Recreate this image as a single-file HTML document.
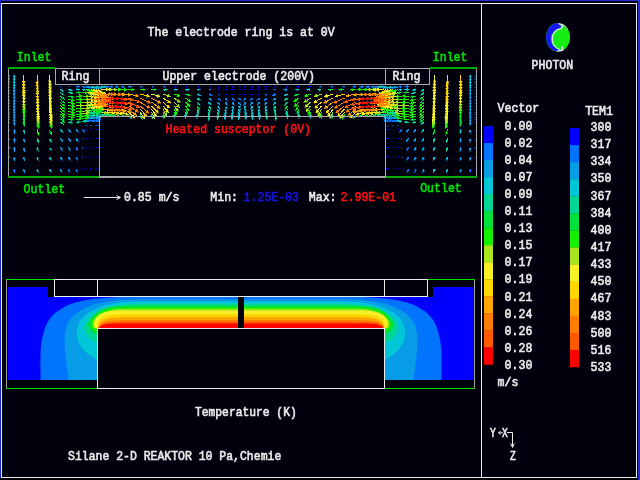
<!DOCTYPE html>
<html lang="en"><head><meta charset="utf-8"><title>PHOTON - Silane 2-D Reaktor</title>
<style>html,body{margin:0;padding:0;background:#01010d;overflow:hidden}svg{display:block}text{font-family:'Liberation Mono','DejaVu Sans Mono',monospace;font-size:12.4px;font-weight:normal;stroke-width:0.6px;paint-order:stroke}</style></head><body>
<svg width="640" height="480" viewBox="0 0 640 480">
<rect x="0" y="0" width="640" height="480" fill="#01010d"/>
<rect x="0" y="0" width="640" height="1" fill="#2030e0"/>
<rect x="0" y="0" width="1" height="480" fill="#1828d0"/>
<rect x="638" y="0" width="2" height="480" fill="#2030c8"/>
<rect x="1" y="1" width="637" height="2" fill="#000004"/>
<rect x="0" y="478" width="638" height="2" fill="#000004"/>
<rect x="1.5" y="3.5" width="635" height="474" fill="none" stroke="#ececec" stroke-width="1"/>
<rect x="481" y="3" width="1" height="474" fill="#ececec"/>
<g stroke-width="1" stroke-linecap="butt" shape-rendering="crispEdges">
<path fill="none" stroke="#0000ff" d="M174.0,86.8L174.5,86.8M185.5,86.8L186.0,86.8M197.0,86.8L197.5,86.8M208.7,86.8L209.2,86.8M217.7,86.8L218.2,86.8M217.7,89.5L218.2,89.5M225.0,86.8L225.5,86.8M225.0,89.5L225.5,89.5M225.0,94.0L225.5,94.3M232.0,86.8L232.5,86.8M232.0,89.5L232.5,89.5M232.0,94.0L232.5,94.3M238.7,86.8L239.2,86.8M238.7,89.5L239.2,89.5M238.7,94.0L239.1,94.3M310.5,86.8L310.0,86.8M299.0,86.8L298.5,86.8M287.5,86.8L287.0,86.8M275.8,86.8L275.3,86.8M266.8,86.8L266.3,86.8M266.8,89.5L266.3,89.5M259.5,86.8L259.0,86.8M259.5,89.5L259.0,89.5M259.5,94.0L259.0,94.3M252.5,86.8L252.0,86.8M252.5,89.5L252.0,89.5M252.5,94.0L252.0,94.3M245.8,86.8L245.3,86.8M245.8,89.5L245.3,89.5M245.8,94.0L245.4,94.3"/>
<path fill="#0000ff" stroke="#0000ff" stroke-width="0.4" d="M9.5,170.0L9.1,168.7L9.9,168.7ZM82.9,169.9L82.0,168.9L82.8,168.5ZM86.8,129.9L85.4,129.7L85.8,128.9ZM86.7,138.8L85.4,138.7L85.7,137.9ZM86.7,147.8L85.3,147.7L85.7,146.9ZM86.6,157.3L85.3,157.1L85.6,156.3ZM86.5,169.2L85.2,169.1L85.5,168.3ZM91.8,129.9L90.4,129.7L90.8,128.9ZM91.7,138.8L90.4,138.7L90.7,137.9ZM91.7,147.8L90.3,147.7L90.7,146.9ZM91.6,157.3L90.3,157.1L90.6,156.3ZM91.5,169.2L90.2,169.1L90.5,168.3ZM96.8,129.9L95.4,129.7L95.8,128.9ZM96.7,138.8L95.4,138.7L95.7,137.9ZM96.7,147.8L95.3,147.7L95.7,146.9ZM96.6,157.3L95.3,157.1L95.6,156.3ZM96.5,169.2L95.2,169.1L95.5,168.3ZM99.3,129.9L97.9,129.7L98.3,128.9ZM99.2,138.8L97.9,138.7L98.2,137.9ZM99.2,147.8L97.8,147.7L98.2,146.9ZM99.1,157.3L97.8,157.1L98.1,156.3ZM99.0,169.2L97.7,169.1L98.0,168.3ZM176.6,86.8L174.5,87.5L174.5,86.1ZM188.1,86.8L186.0,87.5L186.0,86.1ZM199.6,86.8L197.5,87.5L197.5,86.1ZM211.3,86.8L209.2,87.5L209.2,86.1ZM220.3,86.8L218.2,87.5L218.2,86.1ZM220.3,89.7L218.2,90.2L218.3,88.8ZM227.6,86.8L225.5,87.5L225.5,86.1ZM227.6,89.7L225.5,90.2L225.6,88.8ZM227.3,95.3L225.1,94.9L225.8,93.6ZM234.6,86.8L232.5,87.5L232.5,86.1ZM234.6,89.7L232.5,90.2L232.6,88.8ZM234.3,95.3L232.1,94.9L232.8,93.7ZM241.3,86.8L239.2,87.5L239.2,86.1ZM241.3,89.7L239.2,90.2L239.3,88.8ZM240.9,95.3L238.8,94.9L239.5,93.7ZM475.0,170.0L475.4,168.7L474.6,168.7ZM401.6,169.9L402.5,168.9L401.7,168.5ZM397.7,129.9L399.1,129.7L398.7,128.9ZM397.8,138.8L399.1,138.7L398.8,137.9ZM397.8,147.8L399.2,147.7L398.8,146.9ZM397.9,157.3L399.2,157.1L398.9,156.3ZM398.0,169.2L399.3,169.1L399.0,168.3ZM392.7,129.9L394.1,129.7L393.7,128.9ZM392.8,138.8L394.1,138.7L393.8,137.9ZM392.8,147.8L394.2,147.7L393.8,146.9ZM392.9,157.3L394.2,157.1L393.9,156.3ZM393.0,169.2L394.3,169.1L394.0,168.3ZM387.7,129.9L389.1,129.7L388.7,128.9ZM387.8,138.8L389.1,138.7L388.8,137.9ZM387.8,147.8L389.2,147.7L388.8,146.9ZM387.9,157.3L389.2,157.1L388.9,156.3ZM388.0,169.2L389.3,169.1L389.0,168.3ZM385.2,129.9L386.6,129.7L386.2,128.9ZM385.3,138.8L386.6,138.7L386.3,137.9ZM385.3,147.8L386.7,147.7L386.3,146.9ZM385.4,157.3L386.7,157.1L386.4,156.3ZM385.5,169.2L386.8,169.1L386.5,168.3ZM307.9,86.8L310.0,87.5L310.0,86.1ZM296.4,86.8L298.5,87.5L298.5,86.1ZM284.9,86.8L287.0,87.5L287.0,86.1ZM273.2,86.8L275.3,87.5L275.3,86.1ZM264.2,86.8L266.3,87.5L266.3,86.1ZM264.2,89.7L266.3,90.2L266.2,88.8ZM256.9,86.8L259.0,87.5L259.0,86.1ZM256.9,89.7L259.0,90.2L258.9,88.8ZM257.2,95.3L259.4,94.9L258.7,93.6ZM249.9,86.8L252.0,87.5L252.0,86.1ZM249.9,89.7L252.0,90.2L251.9,88.8ZM250.2,95.3L252.4,94.9L251.7,93.7ZM243.2,86.8L245.3,87.5L245.3,86.1ZM243.2,89.7L245.3,90.2L245.2,88.8ZM243.6,95.3L245.7,94.9L245.0,93.7Z"/>
<path fill="none" stroke="#0074fc" d="M9.5,75.0L9.5,75.2M9.5,78.0L9.5,78.2M9.5,81.0L9.5,81.2M9.5,84.0L9.5,84.1M9.5,86.5L9.5,86.6M9.5,89.5L9.5,89.6M9.5,92.5L9.5,92.6M9.5,96.0L9.5,96.1M9.5,99.5L9.5,99.6M9.5,102.5L9.5,102.6M9.5,105.5L9.5,105.6M9.5,108.5L9.5,108.6M9.5,111.5L9.5,111.6M9.5,114.0L9.5,114.1M9.5,116.5L9.5,116.6M9.5,119.0L9.5,119.1M9.5,122.0L9.5,122.1M9.5,129.5L9.5,129.6M14.2,169.0L14.3,169.9M60.5,86.5L60.5,86.5M68.5,86.5L68.6,86.5M68.5,169.0L68.8,169.8M76.0,86.5L76.9,86.5M76.0,147.5L76.4,148.3M76.0,157.0L76.4,157.8M76.0,169.0L76.3,169.8M82.5,86.5L83.4,86.7M82.5,129.5L83.1,130.2M82.5,138.5L82.5,138.5M86.0,122.0L86.7,121.5M86.0,125.5L86.0,125.5M88.5,122.0L89.2,121.5M91.0,122.0L91.7,121.4M91.0,125.5L91.0,125.5M93.5,122.0L94.2,121.4M96.0,122.0L96.6,121.4M96.0,125.5L96.0,125.5M98.5,122.0L99.1,121.3M98.5,125.5L98.5,125.5M106.0,86.8L106.9,86.8M110.0,86.8L110.9,86.8M115.0,86.8L115.9,86.8M121.0,86.8L121.9,86.8M128.4,86.8L129.3,86.8M140.0,86.8L140.5,86.8M151.5,86.8L152.0,86.8M163.0,86.8L163.5,86.8M208.7,89.5L209.2,89.5M208.7,94.0L209.5,94.4M217.7,94.0L218.2,94.2M217.7,98.0L218.4,98.6M225.0,98.0L225.7,98.6M232.0,98.0L232.6,98.6M238.7,98.0L239.3,98.6M475.0,75.0L475.0,75.2M475.0,78.0L475.0,78.2M475.0,81.0L475.0,81.2M475.0,84.0L475.0,84.1M475.0,86.5L475.0,86.6M475.0,89.5L475.0,89.6M475.0,92.5L475.0,92.6M475.0,96.0L475.0,96.1M475.0,99.5L475.0,99.6M475.0,102.5L475.0,102.6M475.0,105.5L475.0,105.6M475.0,108.5L475.0,108.6M475.0,111.5L475.0,111.6M475.0,114.0L475.0,114.1M475.0,116.5L475.0,116.6M475.0,119.0L475.0,119.1M475.0,122.0L475.0,122.1M475.0,129.5L475.0,129.6M470.3,169.0L470.2,169.9M424.0,86.5L424.0,86.5M416.0,86.5L415.9,86.5M416.0,169.0L415.7,169.8M408.5,86.5L407.6,86.5M408.5,147.5L408.1,148.3M408.5,157.0L408.1,157.8M408.5,169.0L408.2,169.8M402.0,86.5L401.1,86.7M402.0,129.5L401.4,130.2M402.0,138.5L402.0,138.5M398.5,122.0L397.8,121.5M398.5,125.5L398.5,125.5M396.0,122.0L395.3,121.5M393.5,122.0L392.8,121.4M393.5,125.5L393.5,125.5M391.0,122.0L390.3,121.4M388.5,122.0L387.9,121.4M388.5,125.5L388.5,125.5M386.0,122.0L385.4,121.3M386.0,125.5L386.0,125.5M378.5,86.8L377.6,86.8M374.5,86.8L373.6,86.8M369.5,86.8L368.6,86.8M363.5,86.8L362.6,86.8M356.1,86.8L355.2,86.8M344.5,86.8L344.0,86.8M333.0,86.8L332.5,86.8M321.5,86.8L321.0,86.8M275.8,89.5L275.3,89.5M275.8,94.0L275.0,94.4M266.8,94.0L266.3,94.2M266.8,98.0L266.1,98.6M259.5,98.0L258.8,98.6M252.5,98.0L251.9,98.6M245.8,98.0L245.2,98.6"/>
<path fill="#0074fc" stroke="#0074fc" stroke-width="0.4" d="M9.5,76.5L9.1,75.2L9.9,75.2ZM9.5,79.5L9.1,78.2L9.9,78.2ZM9.5,82.5L9.1,81.2L9.9,81.2ZM9.5,85.4L9.1,84.1L9.9,84.1ZM9.5,87.9L9.1,86.6L9.9,86.6ZM9.5,90.9L9.1,89.6L9.9,89.6ZM9.5,93.9L9.1,92.6L9.9,92.6ZM9.5,97.4L9.1,96.1L9.9,96.1ZM9.5,100.9L9.1,99.6L9.9,99.6ZM9.5,103.9L9.1,102.6L9.9,102.6ZM9.5,106.9L9.1,105.6L9.9,105.6ZM9.5,109.9L9.1,108.6L9.9,108.6ZM9.5,112.9L9.1,111.6L9.9,111.6ZM9.5,115.4L9.1,114.1L9.9,114.1ZM9.5,117.9L9.1,116.6L9.9,116.6ZM9.5,120.4L9.1,119.1L9.9,119.1ZM9.5,123.4L9.1,122.1L9.9,122.1ZM9.5,130.9L9.1,129.6L9.9,129.6ZM9.5,139.8L9.1,138.5L9.9,138.5ZM9.5,148.7L9.1,147.4L9.9,147.4ZM9.5,158.1L9.1,156.8L9.9,156.8ZM14.5,173.2L13.2,170.0L15.4,169.8ZM61.5,87.4L60.3,86.9L60.8,86.2ZM69.9,86.8L68.5,86.9L68.7,86.1ZM70.1,172.9L67.8,170.2L69.8,169.4ZM80.2,86.5L76.9,87.6L76.9,85.4ZM78.1,151.1L75.5,148.8L77.4,147.7ZM77.8,160.8L75.4,158.3L77.4,157.3ZM77.6,172.9L75.3,170.2L77.3,169.4ZM86.6,87.3L83.2,87.7L83.6,85.6ZM85.3,132.6L82.3,130.9L83.9,129.4ZM83.3,139.6L82.2,138.8L82.9,138.3ZM83.1,148.6L82.1,147.7L82.8,147.2ZM83.0,158.0L82.0,157.0L82.8,156.7ZM89.5,119.7L87.4,122.4L86.1,120.6ZM87.2,126.1L85.8,125.9L86.2,125.1ZM91.9,119.5L89.9,122.3L88.6,120.6ZM94.3,119.4L92.4,122.3L91.0,120.6ZM92.2,126.1L90.8,125.9L91.2,125.1ZM96.6,119.2L94.9,122.2L93.4,120.6ZM99.0,119.0L97.4,122.1L95.9,120.6ZM97.2,126.1L95.8,125.9L96.2,125.1ZM101.2,118.8L99.9,122.0L98.3,120.6ZM99.7,126.1L98.3,125.9L98.7,125.1ZM110.2,86.8L106.9,87.9L106.9,85.7ZM114.2,86.8L110.9,87.9L110.9,85.7ZM119.2,86.8L115.9,87.9L115.9,85.7ZM125.2,86.8L121.9,87.9L121.9,85.7ZM132.6,86.8L129.3,87.9L129.3,85.7ZM142.6,86.8L140.5,87.5L140.5,86.1ZM154.1,86.8L152.0,87.5L152.0,86.1ZM165.6,86.8L163.5,87.5L163.5,86.1ZM211.3,89.7L209.2,90.2L209.3,88.8ZM212.4,95.9L209.0,95.4L210.0,93.4ZM220.0,95.2L217.8,94.9L218.5,93.6ZM220.8,100.9L217.6,99.4L219.1,97.8ZM228.1,100.9L224.9,99.4L226.4,97.8ZM235.0,100.9L231.9,99.4L233.4,97.8ZM241.7,101.0L238.6,99.4L240.1,97.9ZM475.0,76.5L475.4,75.2L474.6,75.2ZM475.0,79.5L475.4,78.2L474.6,78.2ZM475.0,82.5L475.4,81.2L474.6,81.2ZM475.0,85.4L475.4,84.1L474.6,84.1ZM475.0,87.9L475.4,86.6L474.6,86.6ZM475.0,90.9L475.4,89.6L474.6,89.6ZM475.0,93.9L475.4,92.6L474.6,92.6ZM475.0,97.4L475.4,96.1L474.6,96.1ZM475.0,100.9L475.4,99.6L474.6,99.6ZM475.0,103.9L475.4,102.6L474.6,102.6ZM475.0,106.9L475.4,105.6L474.6,105.6ZM475.0,109.9L475.4,108.6L474.6,108.6ZM475.0,112.9L475.4,111.6L474.6,111.6ZM475.0,115.4L475.4,114.1L474.6,114.1ZM475.0,117.9L475.4,116.6L474.6,116.6ZM475.0,120.4L475.4,119.1L474.6,119.1ZM475.0,123.4L475.4,122.1L474.6,122.1ZM475.0,130.9L475.4,129.6L474.6,129.6ZM475.0,139.8L475.4,138.5L474.6,138.5ZM475.0,148.7L475.4,147.4L474.6,147.4ZM475.0,158.1L475.4,156.8L474.6,156.8ZM470.0,173.2L471.3,170.0L469.1,169.8ZM423.0,87.4L424.2,86.9L423.7,86.2ZM414.6,86.8L416.0,86.9L415.8,86.1ZM414.4,172.9L416.7,170.2L414.7,169.4ZM404.3,86.5L407.6,87.6L407.6,85.4ZM406.4,151.1L409.0,148.8L407.1,147.7ZM406.7,160.8L409.1,158.3L407.1,157.3ZM406.9,172.9L409.2,170.2L407.2,169.4ZM397.9,87.3L401.3,87.7L400.9,85.6ZM399.2,132.6L402.2,130.9L400.6,129.4ZM401.2,139.6L402.3,138.8L401.6,138.3ZM401.4,148.6L402.4,147.7L401.7,147.2ZM401.5,158.0L402.5,157.0L401.7,156.7ZM395.0,119.7L397.1,122.4L398.4,120.6ZM397.3,126.1L398.7,125.9L398.3,125.1ZM392.6,119.5L394.6,122.3L395.9,120.6ZM390.2,119.4L392.1,122.3L393.5,120.6ZM392.3,126.1L393.7,125.9L393.3,125.1ZM387.9,119.2L389.6,122.2L391.1,120.6ZM385.5,119.0L387.1,122.1L388.6,120.6ZM387.3,126.1L388.7,125.9L388.3,125.1ZM383.3,118.8L384.6,122.0L386.2,120.6ZM384.8,126.1L386.2,125.9L385.8,125.1ZM374.3,86.8L377.6,87.9L377.6,85.7ZM370.3,86.8L373.6,87.9L373.6,85.7ZM365.3,86.8L368.6,87.9L368.6,85.7ZM359.3,86.8L362.6,87.9L362.6,85.7ZM351.9,86.8L355.2,87.9L355.2,85.7ZM341.9,86.8L344.0,87.5L344.0,86.1ZM330.4,86.8L332.5,87.5L332.5,86.1ZM318.9,86.8L321.0,87.5L321.0,86.1ZM273.2,89.7L275.3,90.2L275.2,88.8ZM272.1,95.9L275.5,95.4L274.5,93.4ZM264.5,95.2L266.7,94.9L266.0,93.6ZM263.7,100.9L266.9,99.4L265.4,97.8ZM256.4,100.9L259.6,99.4L258.1,97.8ZM249.5,100.9L252.6,99.4L251.1,97.8ZM242.8,101.0L245.9,99.4L244.4,97.9Z"/>
<path fill="none" stroke="#069ce6" d="M14.2,86.5L14.2,87.4M14.2,89.5L14.2,90.4M14.2,92.5L14.2,93.4M14.2,96.0L14.2,96.9M14.2,99.5L14.2,100.4M14.2,102.5L14.2,103.4M14.2,105.5L14.2,106.4M14.2,108.5L14.2,109.4M14.2,111.5L14.2,112.4M14.2,114.0L14.2,114.9M14.2,116.5L14.2,117.4M14.2,119.0L14.2,119.9M14.2,122.0L14.2,122.9M14.2,129.5L14.3,130.4M14.2,138.5L14.3,139.4M14.2,147.5L14.3,148.4M14.2,157.0L14.3,157.9M23.6,138.5L23.8,139.4M23.6,147.5L23.8,148.4M23.6,157.0L23.8,157.9M23.6,169.0L23.8,169.9M60.5,138.5L61.0,139.2M60.5,147.5L60.9,148.3M60.5,157.0L60.9,157.8M60.5,169.0L60.8,169.8M68.5,129.5L69.1,130.2M68.5,138.5L69.0,139.2M68.5,147.5L68.9,148.3M68.5,157.0L68.9,157.8M76.0,129.5L76.6,130.2M76.0,138.5L76.5,139.2M86.0,86.5L86.8,86.9M86.0,119.0L86.8,118.5M88.5,86.5L89.3,86.9M88.5,119.0L89.3,118.5M91.0,119.0L91.7,118.5M93.5,119.0L94.2,118.4M96.0,119.0L96.7,118.4M98.5,119.0L99.1,118.4M197.0,89.5L197.9,89.6M208.7,98.0L209.4,98.6M217.7,102.0L218.2,102.7M225.0,102.0L225.5,102.7M232.0,102.0L232.5,102.7M238.7,102.0L239.2,102.7M470.3,86.5L470.3,87.4M470.3,89.5L470.3,90.4M470.3,92.5L470.3,93.4M470.3,96.0L470.3,96.9M470.3,99.5L470.3,100.4M470.3,102.5L470.3,103.4M470.3,105.5L470.3,106.4M470.3,108.5L470.3,109.4M470.3,111.5L470.3,112.4M470.3,114.0L470.3,114.9M470.3,116.5L470.3,117.4M470.3,119.0L470.3,119.9M470.3,122.0L470.3,122.9M470.3,129.5L470.2,130.4M470.3,138.5L470.2,139.4M470.3,147.5L470.2,148.4M470.3,157.0L470.2,157.9M460.9,138.5L460.7,139.4M460.9,147.5L460.7,148.4M460.9,157.0L460.7,157.9M460.9,169.0L460.7,169.9M424.0,138.5L423.5,139.2M424.0,147.5L423.6,148.3M424.0,157.0L423.6,157.8M424.0,169.0L423.7,169.8M416.0,129.5L415.4,130.2M416.0,138.5L415.5,139.2M416.0,147.5L415.6,148.3M416.0,157.0L415.6,157.8M408.5,129.5L407.9,130.2M408.5,138.5L408.0,139.2M398.5,86.5L397.7,86.9M398.5,119.0L397.7,118.5M396.0,86.5L395.2,86.9M396.0,119.0L395.2,118.5M393.5,119.0L392.8,118.5M391.0,119.0L390.3,118.4M388.5,119.0L387.8,118.4M386.0,119.0L385.4,118.4M287.5,89.5L286.6,89.6M275.8,98.0L275.1,98.6M266.8,102.0L266.3,102.7M259.5,102.0L259.0,102.7M252.5,102.0L252.0,102.7M245.8,102.0L245.3,102.7"/>
<path fill="#069ce6" stroke="#069ce6" stroke-width="0.4" d="M14.3,90.7L13.1,87.4L15.3,87.4ZM14.3,93.7L13.1,90.4L15.3,90.4ZM14.3,96.7L13.1,93.4L15.3,93.4ZM14.3,100.2L13.1,96.9L15.3,96.9ZM14.3,103.7L13.1,100.4L15.3,100.4ZM14.3,106.7L13.1,103.4L15.3,103.4ZM14.3,109.7L13.1,106.4L15.3,106.4ZM14.3,112.7L13.1,109.4L15.3,109.4ZM14.4,115.7L13.1,112.4L15.3,112.4ZM14.4,118.2L13.1,114.9L15.3,114.9ZM14.4,120.7L13.2,117.4L15.3,117.3ZM14.4,123.2L13.2,120.0L15.3,119.8ZM14.4,126.2L13.2,123.0L15.3,122.8ZM14.5,133.7L13.2,130.5L15.3,130.3ZM14.5,142.7L13.2,139.5L15.3,139.3ZM14.5,151.7L13.2,148.5L15.4,148.3ZM14.5,161.2L13.2,158.0L15.4,157.8ZM24.4,142.6L22.7,139.6L24.8,139.2ZM24.5,151.6L22.7,148.6L24.9,148.1ZM24.5,161.1L22.7,158.1L24.9,157.6ZM24.5,173.1L22.7,170.1L24.9,169.6ZM63.0,141.9L60.1,139.9L61.9,138.6ZM62.6,151.1L60.0,148.8L61.9,147.7ZM62.3,160.8L59.9,158.3L61.9,157.3ZM62.1,172.9L59.8,170.2L61.8,169.4ZM71.3,132.6L68.3,130.9L69.9,129.4ZM71.0,141.9L68.1,139.9L69.9,138.6ZM70.6,151.1L68.0,148.8L69.9,147.7ZM70.3,160.8L67.9,158.3L69.9,157.3ZM78.8,132.6L75.8,130.9L77.4,129.4ZM78.5,141.9L75.6,139.9L77.4,138.6ZM89.8,88.2L86.4,87.9L87.3,85.9ZM89.6,116.9L87.3,119.5L86.2,117.6ZM92.3,88.4L88.8,87.9L89.8,85.9ZM92.0,116.7L89.8,119.4L88.7,117.6ZM94.4,116.6L92.4,119.4L91.1,117.6ZM96.8,116.4L94.9,119.3L93.5,117.6ZM99.1,116.2L97.4,119.2L95.9,117.6ZM101.4,116.0L99.9,119.1L98.3,117.6ZM201.2,89.8L197.8,90.6L198.0,88.5ZM211.9,100.8L208.7,99.4L210.1,97.8ZM220.2,105.4L217.4,103.4L219.1,102.1ZM227.5,105.4L224.6,103.4L226.4,102.1ZM234.4,105.5L231.6,103.4L233.4,102.1ZM241.0,105.5L238.3,103.4L240.1,102.1ZM470.2,90.7L471.4,87.4L469.2,87.4ZM470.2,93.7L471.4,90.4L469.2,90.4ZM470.2,96.7L471.4,93.4L469.2,93.4ZM470.2,100.2L471.4,96.9L469.2,96.9ZM470.2,103.7L471.4,100.4L469.2,100.4ZM470.2,106.7L471.4,103.4L469.2,103.4ZM470.2,109.7L471.4,106.4L469.2,106.4ZM470.2,112.7L471.4,109.4L469.2,109.4ZM470.1,115.7L471.4,112.4L469.2,112.4ZM470.1,118.2L471.4,114.9L469.2,114.9ZM470.1,120.7L471.3,117.4L469.2,117.3ZM470.1,123.2L471.3,120.0L469.2,119.8ZM470.1,126.2L471.3,123.0L469.2,122.8ZM470.0,133.7L471.3,130.5L469.2,130.3ZM470.0,142.7L471.3,139.5L469.2,139.3ZM470.0,151.7L471.3,148.5L469.1,148.3ZM470.0,161.2L471.3,158.0L469.1,157.8ZM460.1,142.6L461.8,139.6L459.7,139.2ZM460.0,151.6L461.8,148.6L459.6,148.1ZM460.0,161.1L461.8,158.1L459.6,157.6ZM460.0,173.1L461.8,170.1L459.6,169.6ZM421.5,141.9L424.4,139.9L422.6,138.6ZM421.9,151.1L424.5,148.8L422.6,147.7ZM422.2,160.8L424.6,158.3L422.6,157.3ZM422.4,172.9L424.7,170.2L422.7,169.4ZM413.2,132.6L416.2,130.9L414.6,129.4ZM413.5,141.9L416.4,139.9L414.6,138.6ZM413.9,151.1L416.5,148.8L414.6,147.7ZM414.2,160.8L416.6,158.3L414.6,157.3ZM405.7,132.6L408.7,130.9L407.1,129.4ZM406.0,141.9L408.9,139.9L407.1,138.6ZM394.7,88.2L398.1,87.9L397.2,85.9ZM394.9,116.9L397.2,119.5L398.3,117.6ZM392.2,88.4L395.7,87.9L394.7,85.9ZM392.5,116.7L394.7,119.4L395.8,117.6ZM390.1,116.6L392.1,119.4L393.4,117.6ZM387.7,116.4L389.6,119.3L391.0,117.6ZM385.4,116.2L387.1,119.2L388.6,117.6ZM383.1,116.0L384.6,119.1L386.2,117.6ZM283.3,89.8L286.7,90.6L286.5,88.5ZM272.6,100.8L275.8,99.4L274.4,97.8ZM264.3,105.4L267.1,103.4L265.4,102.1ZM257.0,105.4L259.9,103.4L258.1,102.1ZM250.1,105.5L252.9,103.4L251.1,102.1ZM243.5,105.5L246.2,103.4L244.4,102.1Z"/>
<path fill="none" stroke="#00c6d8" d="M14.2,75.0L14.2,75.9M14.2,78.0L14.2,78.9M14.2,81.0L14.2,81.9M14.2,84.0L14.2,84.9M23.6,129.5L23.8,130.4M37.0,157.0L37.3,157.8M37.0,169.0L37.3,169.8M49.6,147.5L50.0,148.3M49.6,157.0L50.0,157.8M49.6,169.0L50.0,169.8M60.5,89.5L61.2,90.1M60.5,129.5L61.1,130.2M68.5,89.5L69.4,89.7M76.0,89.5L76.9,89.5M82.5,89.5L83.4,89.6M86.0,114.0L86.8,113.6M91.0,86.5L91.8,86.9M93.5,86.5L94.3,87.0M96.0,86.5L96.7,87.0M98.5,86.5L99.2,87.1M100.5,86.8L101.4,86.8M103.0,86.8L103.9,86.8M174.0,89.5L174.9,89.6M174.0,114.5L174.0,115.4M185.5,89.5L186.4,89.6M185.5,114.5L185.5,115.4M197.0,94.0L197.8,94.4M197.0,114.5L197.0,115.4M208.7,102.0L209.3,102.7M217.7,105.8L218.1,106.5M217.7,109.0L218.0,109.8M225.0,105.8L225.4,106.5M225.0,109.0L225.3,109.8M225.0,112.0L225.2,112.9M225.0,114.5L225.0,115.4M225.0,116.0L225.0,116.9M232.0,105.8L232.4,106.5M232.0,109.0L232.3,109.8M232.0,112.0L232.1,112.9M232.0,114.5L232.0,115.4M232.0,116.0L232.0,116.9M238.7,105.8L239.1,106.6M238.7,109.0L239.0,109.9M238.7,112.0L238.8,112.9M238.7,114.5L238.7,115.4M238.7,116.0L238.7,116.9M470.3,75.0L470.3,75.9M470.3,78.0L470.3,78.9M470.3,81.0L470.3,81.9M470.3,84.0L470.3,84.9M460.9,129.5L460.7,130.4M447.5,157.0L447.2,157.8M447.5,169.0L447.2,169.8M434.9,147.5L434.5,148.3M434.9,157.0L434.5,157.8M434.9,169.0L434.5,169.8M424.0,89.5L423.3,90.1M424.0,129.5L423.4,130.2M416.0,89.5L415.1,89.7M408.5,89.5L407.6,89.5M402.0,89.5L401.1,89.6M398.5,114.0L397.7,113.6M393.5,86.5L392.7,86.9M391.0,86.5L390.2,87.0M388.5,86.5L387.8,87.0M386.0,86.5L385.3,87.1M384.0,86.8L383.1,86.8M381.5,86.8L380.6,86.8M310.5,89.5L309.6,89.6M310.5,114.5L310.5,115.4M299.0,89.5L298.1,89.6M299.0,114.5L299.0,115.4M287.5,94.0L286.7,94.4M287.5,114.5L287.5,115.4M275.8,102.0L275.2,102.7M266.8,105.8L266.4,106.5M266.8,109.0L266.5,109.8M259.5,105.8L259.1,106.5M259.5,109.0L259.2,109.8M259.5,112.0L259.3,112.9M259.5,114.5L259.5,115.4M259.5,116.0L259.5,116.9M252.5,105.8L252.1,106.5M252.5,109.0L252.2,109.8M252.5,112.0L252.4,112.9M252.5,114.5L252.5,115.4M252.5,116.0L252.5,116.9M245.8,105.8L245.4,106.6M245.8,109.0L245.5,109.9M245.8,112.0L245.7,112.9M245.8,114.5L245.8,115.4M245.8,116.0L245.8,116.9"/>
<path fill="#00c6d8" stroke="#00c6d8" stroke-width="0.4" d="M14.2,79.2L13.1,75.9L15.3,75.9ZM14.2,82.2L13.1,78.9L15.3,78.9ZM14.2,85.2L13.1,81.9L15.3,81.9ZM14.2,88.2L13.1,84.9L15.3,84.9ZM24.4,133.6L22.7,130.6L24.8,130.2ZM38.4,160.9L36.3,158.2L38.3,157.5ZM38.4,172.9L36.3,170.2L38.3,169.5ZM51.3,151.3L49.0,148.8L51.0,147.9ZM51.4,160.8L49.0,158.3L51.0,157.4ZM51.4,172.8L49.0,170.3L51.0,169.4ZM63.7,92.2L60.5,90.9L61.9,89.2ZM63.3,132.6L60.3,130.9L61.9,129.4ZM72.6,90.4L69.2,90.8L69.6,88.6ZM80.2,89.5L76.9,90.6L76.9,88.4ZM86.7,90.1L83.2,90.7L83.5,88.6ZM89.9,112.3L87.3,114.6L86.4,112.6ZM94.7,88.5L91.3,87.9L92.3,86.0ZM97.1,88.7L93.7,87.9L94.8,86.0ZM99.4,88.9L96.1,87.9L97.4,86.1ZM101.8,89.2L98.5,87.9L99.9,86.2ZM104.7,86.8L101.4,87.9L101.4,85.7ZM107.2,86.8L103.9,87.9L103.9,85.7ZM178.2,89.7L174.8,90.6L175.0,88.5ZM174.1,118.7L172.9,115.4L175.1,115.4ZM189.7,89.8L186.3,90.6L186.5,88.5ZM185.5,118.7L184.4,115.4L186.6,115.4ZM200.8,95.7L197.4,95.4L198.3,93.4ZM197.0,118.7L195.9,115.4L198.1,115.4ZM211.3,105.3L208.4,103.4L210.1,102.0ZM219.8,109.4L217.2,107.1L219.1,106.0ZM219.3,112.9L217.0,110.2L219.0,109.4ZM227.0,109.4L224.5,107.1L226.4,106.0ZM226.5,112.9L224.3,110.2L226.3,109.4ZM225.8,116.1L224.1,113.1L226.2,112.7ZM225.0,118.7L223.9,115.4L226.1,115.4ZM225.0,120.2L223.9,116.9L226.1,116.9ZM233.9,109.5L231.4,107.1L233.4,106.0ZM233.4,112.9L231.3,110.2L233.3,109.5ZM232.7,116.1L231.1,113.1L233.2,112.7ZM232.0,118.7L230.9,115.4L233.1,115.4ZM232.0,120.2L230.9,116.9L233.1,116.9ZM240.5,109.5L238.1,107.0L240.1,106.1ZM240.0,113.0L238.0,110.2L240.0,109.5ZM239.2,116.2L237.7,113.0L239.9,112.8ZM238.7,118.7L237.6,115.4L239.8,115.4ZM238.7,120.2L237.6,116.9L239.8,116.9ZM470.3,79.2L471.4,75.9L469.2,75.9ZM470.3,82.2L471.4,78.9L469.2,78.9ZM470.3,85.2L471.4,81.9L469.2,81.9ZM470.3,88.2L471.4,84.9L469.2,84.9ZM460.1,133.6L461.8,130.6L459.7,130.2ZM446.1,160.9L448.2,158.2L446.2,157.5ZM446.1,172.9L448.2,170.2L446.2,169.5ZM433.2,151.3L435.5,148.8L433.5,147.9ZM433.1,160.8L435.5,158.3L433.5,157.4ZM433.1,172.8L435.5,170.3L433.5,169.4ZM420.8,92.2L424.0,90.9L422.6,89.2ZM421.2,132.6L424.2,130.9L422.6,129.4ZM411.9,90.4L415.3,90.8L414.9,88.6ZM404.3,89.5L407.6,90.6L407.6,88.4ZM397.8,90.1L401.3,90.7L401.0,88.6ZM394.6,112.3L397.2,114.6L398.1,112.6ZM389.8,88.5L393.2,87.9L392.2,86.0ZM387.4,88.7L390.8,87.9L389.7,86.0ZM385.1,88.9L388.4,87.9L387.1,86.1ZM382.7,89.2L386.0,87.9L384.6,86.2ZM379.8,86.8L383.1,87.9L383.1,85.7ZM377.3,86.8L380.6,87.9L380.6,85.7ZM306.3,89.7L309.7,90.6L309.5,88.5ZM310.4,118.7L311.6,115.4L309.4,115.4ZM294.8,89.8L298.2,90.6L298.0,88.5ZM299.0,118.7L300.1,115.4L297.9,115.4ZM283.7,95.7L287.1,95.4L286.2,93.4ZM287.5,118.7L288.6,115.4L286.4,115.4ZM273.2,105.3L276.1,103.4L274.4,102.0ZM264.7,109.4L267.3,107.1L265.4,106.0ZM265.2,112.9L267.5,110.2L265.5,109.4ZM257.5,109.4L260.0,107.1L258.1,106.0ZM258.0,112.9L260.2,110.2L258.2,109.4ZM258.7,116.1L260.4,113.1L258.3,112.7ZM259.5,118.7L260.6,115.4L258.4,115.4ZM259.5,120.2L260.6,116.9L258.4,116.9ZM250.6,109.5L253.1,107.1L251.1,106.0ZM251.1,112.9L253.2,110.2L251.2,109.5ZM251.8,116.1L253.4,113.1L251.3,112.7ZM252.5,118.7L253.6,115.4L251.4,115.4ZM252.5,120.2L253.6,116.9L251.4,116.9ZM244.0,109.5L246.4,107.0L244.4,106.1ZM244.5,113.0L246.5,110.2L244.5,109.5ZM245.3,116.2L246.8,113.0L244.6,112.8ZM245.8,118.7L246.9,115.4L244.7,115.4ZM245.8,120.2L246.9,116.9L244.7,116.9Z"/>
<path fill="none" stroke="#00d796" d="M37.0,138.5L37.5,140.0M37.0,147.5L37.4,148.5M49.6,138.5L50.0,139.5M60.5,92.5L61.6,93.4M60.5,122.0L61.2,122.6M68.5,92.5L70.2,92.9M68.5,122.0L69.7,122.3M76.0,122.0L77.5,122.0M82.5,122.0L84.2,121.5M86.0,111.5L87.3,111.1M86.0,116.5L86.9,116.1M88.5,114.0L89.5,113.5M88.5,116.5L89.4,116.0M91.0,114.0L92.5,113.2M91.0,116.5L91.8,116.0M93.5,116.5L94.3,115.9M96.0,116.5L96.8,115.9M98.5,116.5L99.2,115.8M100.5,114.5L102.1,114.7M103.0,114.5L104.7,114.8M151.5,114.5L151.9,116.1M163.0,89.5L164.4,89.6M163.0,114.5L163.1,115.5M185.5,112.0L185.9,113.5M197.0,98.0L197.9,98.7M197.0,102.0L198.2,103.3M197.0,109.0L197.7,110.6M197.0,112.0L197.3,113.4M208.7,105.8L209.3,106.8M208.7,109.0L209.2,110.2M208.7,112.0L209.0,113.3M208.7,114.5L208.7,115.9M208.7,116.0L208.7,117.7M217.7,112.0L217.9,112.9M217.7,114.5L217.7,115.7M217.7,116.0L217.7,116.9M447.5,138.5L447.0,140.0M447.5,147.5L447.1,148.5M434.9,138.5L434.5,139.5M424.0,92.5L422.9,93.4M424.0,122.0L423.3,122.6M416.0,92.5L414.3,92.9M416.0,122.0L414.8,122.3M408.5,122.0L407.0,122.0M402.0,122.0L400.3,121.5M398.5,111.5L397.2,111.1M398.5,116.5L397.6,116.1M396.0,114.0L395.0,113.5M396.0,116.5L395.1,116.0M393.5,114.0L392.0,113.2M393.5,116.5L392.7,116.0M391.0,116.5L390.2,115.9M388.5,116.5L387.7,115.9M386.0,116.5L385.3,115.8M384.0,114.5L382.4,114.7M381.5,114.5L379.8,114.8M333.0,114.5L332.6,116.1M321.5,89.5L320.1,89.6M321.5,114.5L321.4,115.5M299.0,112.0L298.6,113.5M287.5,98.0L286.6,98.7M287.5,102.0L286.3,103.3M287.5,109.0L286.8,110.6M287.5,112.0L287.2,113.4M275.8,105.8L275.2,106.8M275.8,109.0L275.3,110.2M275.8,112.0L275.5,113.3M275.8,114.5L275.8,115.9M275.8,116.0L275.8,117.7M266.8,112.0L266.6,112.9M266.8,114.5L266.8,115.7M266.8,116.0L266.8,116.9"/>
<path fill="#00d796" stroke="#00d796" stroke-width="0.4" d="M38.5,143.1L36.5,140.3L38.5,139.7ZM38.5,151.6L36.3,148.9L38.4,148.2ZM51.3,142.5L49.0,139.9L51.0,139.1ZM64.1,95.5L60.9,94.2L62.3,92.6ZM63.8,124.7L60.5,123.4L61.9,121.8ZM73.4,93.5L70.0,93.9L70.4,91.8ZM73.0,122.9L69.5,123.3L70.0,121.2ZM80.8,122.0L77.5,123.1L77.5,120.9ZM87.4,120.5L84.5,122.5L83.9,120.4ZM90.4,110.0L87.6,112.1L86.9,110.0ZM89.8,114.6L87.4,117.0L86.4,115.1ZM92.5,112.1L90.0,114.5L89.0,112.5ZM92.2,114.4L89.9,117.0L88.8,115.1ZM95.4,111.7L93.0,114.2L91.9,112.3ZM94.6,114.2L92.4,116.9L91.3,115.1ZM97.0,114.1L94.9,116.8L93.7,115.0ZM99.4,113.8L97.4,116.7L96.1,115.0ZM101.7,113.6L100.0,116.6L98.5,115.0ZM105.3,115.2L101.9,115.8L102.2,113.7ZM108.0,115.3L104.6,115.9L104.9,113.7ZM152.7,119.3L150.9,116.4L153.0,115.8ZM167.7,89.8L164.4,90.7L164.5,88.5ZM163.4,118.8L162.0,115.6L164.2,115.4ZM186.7,116.7L184.8,113.7L186.9,113.2ZM200.5,100.7L197.3,99.6L198.6,97.9ZM200.4,105.8L197.3,104.0L199.0,102.6ZM199.0,113.7L196.7,111.1L198.7,110.2ZM198.1,116.6L196.3,113.6L198.4,113.1ZM211.0,109.7L208.4,107.4L210.3,106.3ZM210.5,113.3L208.2,110.6L210.2,109.8ZM209.7,116.6L207.9,113.6L210.0,113.1ZM208.7,119.2L207.6,115.9L209.8,115.9ZM208.7,121.0L207.6,117.7L209.8,117.7ZM218.5,116.1L216.8,113.1L218.9,112.7ZM217.7,119.0L216.6,115.7L218.8,115.7ZM217.7,120.2L216.6,116.9L218.8,116.9ZM446.0,143.1L448.0,140.3L446.0,139.7ZM446.0,151.6L448.2,148.9L446.1,148.2ZM433.2,142.5L435.5,139.9L433.5,139.1ZM420.4,95.5L423.6,94.2L422.2,92.6ZM420.7,124.7L424.0,123.4L422.6,121.8ZM411.1,93.5L414.5,93.9L414.1,91.8ZM411.5,122.9L415.0,123.3L414.5,121.2ZM403.7,122.0L407.0,123.1L407.0,120.9ZM397.1,120.5L400.0,122.5L400.6,120.4ZM394.1,110.0L396.9,112.1L397.6,110.0ZM394.7,114.6L397.1,117.0L398.1,115.1ZM392.0,112.1L394.5,114.5L395.5,112.5ZM392.3,114.4L394.6,117.0L395.7,115.1ZM389.1,111.7L391.5,114.2L392.6,112.3ZM389.9,114.2L392.1,116.9L393.2,115.1ZM387.5,114.1L389.6,116.8L390.8,115.0ZM385.1,113.8L387.1,116.7L388.4,115.0ZM382.8,113.6L384.5,116.6L386.0,115.0ZM379.2,115.2L382.6,115.8L382.3,113.7ZM376.5,115.3L379.9,115.9L379.6,113.7ZM331.8,119.3L333.6,116.4L331.5,115.8ZM316.8,89.8L320.1,90.7L320.0,88.5ZM321.1,118.8L322.5,115.6L320.3,115.4ZM297.8,116.7L299.7,113.7L297.6,113.2ZM284.0,100.7L287.2,99.6L285.9,97.9ZM284.1,105.8L287.2,104.0L285.5,102.6ZM285.5,113.7L287.8,111.1L285.8,110.2ZM286.4,116.6L288.2,113.6L286.1,113.1ZM273.5,109.7L276.1,107.4L274.2,106.3ZM274.0,113.3L276.3,110.6L274.3,109.8ZM274.8,116.6L276.6,113.6L274.5,113.1ZM275.8,119.2L276.9,115.9L274.7,115.9ZM275.8,121.0L276.9,117.7L274.7,117.7ZM266.0,116.1L267.7,113.1L265.6,112.7ZM266.8,119.0L267.9,115.7L265.7,115.7ZM266.8,120.2L267.9,116.9L265.7,116.9Z"/>
<path fill="none" stroke="#00e13c" d="M23.6,114.0L24.0,116.9M23.6,116.5L24.0,119.2M23.6,119.0L24.0,121.4M23.6,122.0L23.9,123.9M49.6,129.5L50.5,131.9M60.5,96.0L62.4,97.6M60.5,99.5L62.6,101.3M60.5,116.5L62.5,118.2M60.5,119.0L62.3,120.5M68.5,96.0L71.4,96.6M68.5,119.0L71.1,119.6M76.0,92.5L78.1,92.5M82.5,92.5L84.8,92.7M88.5,111.5L90.3,110.8M91.0,111.5L93.4,110.5M93.5,114.0L95.3,112.9M96.0,114.0L98.0,112.6M98.5,114.0L100.6,112.3M106.0,114.5L108.6,115.0M110.0,114.5L112.8,115.1M115.0,114.5L117.2,115.2M121.0,114.5L123.0,115.5M128.4,114.5L129.9,116.4M140.0,89.5L142.8,89.6M140.0,114.5L140.9,116.5M151.5,89.5L153.7,89.6M174.0,112.0L174.6,114.2M185.5,94.0L187.8,94.9M185.5,109.0L186.5,111.3M197.0,105.8L198.1,107.5M460.9,114.0L460.5,116.9M460.9,116.5L460.5,119.2M460.9,119.0L460.5,121.4M460.9,122.0L460.6,123.9M434.9,129.5L434.0,131.9M424.0,96.0L422.1,97.6M424.0,99.5L421.9,101.3M424.0,116.5L422.0,118.2M424.0,119.0L422.2,120.5M416.0,96.0L413.1,96.6M416.0,119.0L413.4,119.6M408.5,92.5L406.4,92.5M402.0,92.5L399.7,92.7M396.0,111.5L394.2,110.8M393.5,111.5L391.1,110.5M391.0,114.0L389.2,112.9M388.5,114.0L386.5,112.6M386.0,114.0L383.9,112.3M378.5,114.5L375.9,115.0M374.5,114.5L371.7,115.1M369.5,114.5L367.3,115.2M363.5,114.5L361.5,115.5M356.1,114.5L354.6,116.4M344.5,89.5L341.7,89.6M344.5,114.5L343.6,116.5M333.0,89.5L330.8,89.6M310.5,112.0L309.9,114.2M299.0,94.0L296.7,94.9M299.0,109.0L298.0,111.3M287.5,105.8L286.4,107.5"/>
<path fill="#00e13c" stroke="#00e13c" stroke-width="0.4" d="M24.4,120.2L22.9,117.0L25.1,116.8ZM24.4,122.4L22.9,119.3L25.0,119.0ZM24.4,124.6L22.9,121.5L25.0,121.2ZM24.4,127.2L22.8,124.1L25.0,123.7ZM51.7,135.0L49.5,132.3L51.5,131.5ZM65.0,99.7L61.7,98.5L63.1,96.8ZM65.2,103.4L61.9,102.1L63.3,100.5ZM65.0,120.3L61.8,119.0L63.2,117.4ZM64.8,122.6L61.6,121.3L63.0,119.6ZM74.6,97.3L71.1,97.7L71.6,95.5ZM74.4,120.2L70.9,120.6L71.4,118.5ZM81.4,92.5L78.1,93.6L78.1,91.4ZM88.1,93.1L84.7,93.8L84.9,91.7ZM93.4,109.6L90.7,111.8L89.9,109.8ZM96.4,109.2L93.8,111.5L92.9,109.5ZM98.1,111.2L95.9,113.9L94.8,112.0ZM100.8,110.8L98.6,113.5L97.4,111.7ZM103.2,110.3L101.3,113.2L99.9,111.5ZM111.8,115.6L108.4,116.0L108.8,113.9ZM116.0,115.8L112.6,116.1L113.0,114.0ZM120.3,116.3L116.9,116.3L117.5,114.2ZM125.9,116.9L122.5,116.4L123.4,114.5ZM131.9,119.0L129.0,117.1L130.8,115.8ZM146.1,89.8L142.7,90.7L142.8,88.5ZM142.3,119.5L139.9,116.9L141.9,116.0ZM157.0,89.8L153.6,90.7L153.7,88.5ZM175.5,117.4L173.6,114.5L175.7,114.0ZM190.9,96.0L187.4,95.9L188.2,93.8ZM187.9,114.3L185.5,111.7L187.5,110.8ZM199.9,110.2L197.2,108.0L199.0,106.9ZM460.1,120.2L461.6,117.0L459.4,116.8ZM460.1,122.4L461.6,119.3L459.5,119.0ZM460.1,124.6L461.6,121.5L459.5,121.2ZM460.1,127.2L461.7,124.1L459.5,123.7ZM432.8,135.0L435.0,132.3L433.0,131.5ZM419.5,99.7L422.8,98.5L421.4,96.8ZM419.3,103.4L422.6,102.1L421.2,100.5ZM419.5,120.3L422.7,119.0L421.3,117.4ZM419.7,122.6L422.9,121.3L421.5,119.6ZM409.9,97.3L413.4,97.7L412.9,95.5ZM410.1,120.2L413.6,120.6L413.1,118.5ZM403.1,92.5L406.4,93.6L406.4,91.4ZM396.4,93.1L399.8,93.8L399.6,91.7ZM391.1,109.6L393.8,111.8L394.6,109.8ZM388.1,109.2L390.7,111.5L391.6,109.5ZM386.4,111.2L388.6,113.9L389.7,112.0ZM383.7,110.8L385.9,113.5L387.1,111.7ZM381.3,110.3L383.2,113.2L384.6,111.5ZM372.7,115.6L376.1,116.0L375.7,113.9ZM368.5,115.8L371.9,116.1L371.5,114.0ZM364.2,116.3L367.6,116.3L367.0,114.2ZM358.6,116.9L362.0,116.4L361.1,114.5ZM352.6,119.0L355.5,117.1L353.7,115.8ZM338.4,89.8L341.8,90.7L341.7,88.5ZM342.2,119.5L344.6,116.9L342.6,116.0ZM327.5,89.8L330.9,90.7L330.8,88.5ZM309.0,117.4L310.9,114.5L308.8,114.0ZM293.6,96.0L297.1,95.9L296.3,93.8ZM296.6,114.3L299.0,111.7L297.0,110.8ZM284.6,110.2L287.3,108.0L285.5,106.9Z"/>
<path fill="none" stroke="#14f000" d="M23.6,105.5L23.9,109.3M23.6,108.5L24.0,112.0M23.6,111.5L24.0,114.7M37.0,119.0L37.9,122.8M37.0,122.0L37.9,125.5M37.0,129.5L37.9,132.4M49.6,122.0L50.8,125.6M60.5,102.5L62.8,104.4M60.5,105.5L62.9,107.5M60.5,108.5L62.9,110.5M60.5,111.5L62.8,113.5M60.5,114.0L62.8,115.9M68.5,99.5L71.6,100.2M68.5,102.5L71.9,103.2M68.5,105.5L72.1,106.3M68.5,108.5L72.0,109.2M68.5,111.5L71.9,112.2M68.5,114.0L71.8,114.7M68.5,116.5L71.5,117.1M76.0,96.0L79.3,96.0M76.0,99.5L79.6,99.5M76.0,102.5L79.9,102.5M76.0,108.5L80.0,108.5M76.0,111.5L79.9,111.5M76.0,114.0L79.8,114.0M76.0,116.5L79.5,116.5M76.0,119.0L79.1,119.0M82.5,96.0L86.2,96.2M82.5,99.5L86.5,99.5M82.5,116.5L86.2,115.6M82.5,119.0L85.8,118.1M86.0,89.5L88.8,90.5M86.0,108.5L89.2,107.7M88.5,89.5L92.1,90.9M93.5,111.5L96.3,110.1M96.0,111.5L99.1,109.8M98.5,111.5L101.7,109.4M106.0,89.5L109.8,89.5M115.0,89.5L118.4,89.5M121.0,89.5L124.2,89.6M128.4,89.5L131.5,89.6M163.0,112.0L164.1,115.2M174.0,94.0L177.3,95.2M174.0,109.0L175.5,112.2M185.5,98.0L188.3,100.0M185.5,102.0L188.0,104.5M185.5,105.8L187.3,108.4M460.9,105.5L460.6,109.3M460.9,108.5L460.5,112.0M460.9,111.5L460.5,114.7M447.5,119.0L446.6,122.8M447.5,122.0L446.6,125.5M447.5,129.5L446.6,132.4M434.9,122.0L433.7,125.6M424.0,102.5L421.7,104.4M424.0,105.5L421.6,107.5M424.0,108.5L421.6,110.5M424.0,111.5L421.7,113.5M424.0,114.0L421.7,115.9M416.0,99.5L412.9,100.2M416.0,102.5L412.6,103.2M416.0,105.5L412.4,106.3M416.0,108.5L412.5,109.2M416.0,111.5L412.6,112.2M416.0,114.0L412.7,114.7M416.0,116.5L413.0,117.1M408.5,96.0L405.2,96.0M408.5,99.5L404.9,99.5M408.5,102.5L404.6,102.5M408.5,108.5L404.5,108.5M408.5,111.5L404.6,111.5M408.5,114.0L404.7,114.0M408.5,116.5L405.0,116.5M408.5,119.0L405.4,119.0M402.0,96.0L398.3,96.2M402.0,99.5L398.0,99.5M402.0,116.5L398.3,115.6M402.0,119.0L398.7,118.1M398.5,89.5L395.7,90.5M398.5,108.5L395.3,107.7M396.0,89.5L392.4,90.9M391.0,111.5L388.2,110.1M388.5,111.5L385.4,109.8M386.0,111.5L382.8,109.4M378.5,89.5L374.7,89.5M369.5,89.5L366.1,89.5M363.5,89.5L360.3,89.6M356.1,89.5L353.0,89.6M321.5,112.0L320.4,115.2M310.5,94.0L307.2,95.2M310.5,109.0L309.0,112.2M299.0,98.0L296.2,100.0M299.0,102.0L296.5,104.5M299.0,105.8L297.2,108.4"/>
<path fill="#14f000" stroke="#14f000" stroke-width="0.4" d="M24.2,112.6L22.3,109.5L25.6,109.2ZM24.3,115.2L22.3,112.1L25.6,111.8ZM24.3,117.9L22.9,114.8L25.0,114.5ZM38.7,126.0L36.3,123.2L39.5,122.4ZM38.8,128.7L36.3,125.9L39.5,125.1ZM38.8,135.6L36.8,132.7L38.9,132.1ZM51.9,128.7L49.2,126.1L52.4,125.1ZM65.3,106.6L62.1,105.3L63.5,103.6ZM65.5,109.7L62.2,108.4L63.6,106.7ZM65.4,112.6L62.2,111.3L63.6,109.7ZM65.4,115.6L62.1,114.3L63.5,112.6ZM65.3,118.0L62.1,116.7L63.5,115.1ZM74.9,100.9L71.3,101.8L72.0,98.6ZM75.1,103.9L71.5,104.8L72.2,101.6ZM75.3,106.9L71.7,107.9L72.4,104.6ZM75.2,109.9L71.6,110.9L72.3,107.6ZM75.1,112.9L71.6,113.8L72.3,110.6ZM75.1,115.4L71.5,116.3L72.2,113.1ZM74.7,117.8L71.3,118.2L71.7,116.1ZM82.6,96.0L79.3,97.7L79.3,94.3ZM82.9,99.5L79.6,101.2L79.6,97.8ZM83.2,102.5L79.9,104.2L79.9,100.8ZM83.3,108.5L80.0,110.2L80.0,106.8ZM83.2,111.5L79.9,113.2L79.9,109.8ZM83.1,114.0L79.8,115.7L79.8,112.3ZM82.8,116.5L79.5,118.2L79.5,114.8ZM82.4,119.0L79.1,120.1L79.1,117.9ZM89.5,96.4L86.1,97.9L86.3,94.6ZM89.8,99.6L86.5,101.2L86.5,97.9ZM89.4,114.9L86.6,117.2L85.8,114.0ZM89.0,117.2L86.2,119.7L85.3,116.5ZM91.9,91.6L88.5,91.5L89.2,89.5ZM92.4,106.8L89.6,109.3L88.8,106.1ZM95.1,92.1L91.5,92.4L92.7,89.4ZM99.3,108.7L96.8,111.1L95.8,109.2ZM101.9,108.2L99.9,111.2L98.3,108.3ZM104.4,107.6L102.6,110.8L100.8,108.0ZM113.1,89.5L109.8,91.2L109.8,87.9ZM121.7,89.6L118.4,91.2L118.4,87.9ZM127.5,89.6L124.2,91.2L124.3,87.9ZM134.8,89.7L131.4,90.7L131.5,88.5ZM165.1,118.3L162.5,115.7L165.6,114.7ZM180.4,96.4L176.7,96.8L177.9,93.7ZM176.9,115.2L174.0,112.9L177.0,111.5ZM191.1,101.8L187.4,101.3L189.3,98.6ZM190.3,106.8L186.8,105.6L189.1,103.3ZM189.2,111.1L186.4,109.0L188.2,107.7ZM460.3,112.6L462.2,109.5L458.9,109.2ZM460.2,115.2L462.2,112.1L458.9,111.8ZM460.2,117.9L461.6,114.8L459.5,114.5ZM445.8,126.0L448.2,123.2L445.0,122.4ZM445.7,128.7L448.2,125.9L445.0,125.1ZM445.7,135.6L447.7,132.7L445.6,132.1ZM432.6,128.7L435.3,126.1L432.1,125.1ZM419.2,106.6L422.4,105.3L421.0,103.6ZM419.0,109.7L422.3,108.4L420.9,106.7ZM419.1,112.6L422.3,111.3L420.9,109.7ZM419.1,115.6L422.4,114.3L421.0,112.6ZM419.2,118.0L422.4,116.7L421.0,115.1ZM409.6,100.9L413.2,101.8L412.5,98.6ZM409.4,103.9L413.0,104.8L412.3,101.6ZM409.2,106.9L412.8,107.9L412.1,104.6ZM409.3,109.9L412.9,110.9L412.2,107.6ZM409.4,112.9L412.9,113.8L412.2,110.6ZM409.4,115.4L413.0,116.3L412.3,113.1ZM409.8,117.8L413.2,118.2L412.8,116.1ZM401.9,96.0L405.2,97.7L405.2,94.3ZM401.6,99.5L404.9,101.2L404.9,97.8ZM401.3,102.5L404.6,104.2L404.6,100.8ZM401.2,108.5L404.5,110.2L404.5,106.8ZM401.3,111.5L404.6,113.2L404.6,109.8ZM401.4,114.0L404.7,115.7L404.7,112.3ZM401.7,116.5L405.0,118.2L405.0,114.8ZM402.1,119.0L405.4,120.1L405.4,117.9ZM395.0,96.4L398.4,97.9L398.2,94.6ZM394.7,99.6L398.0,101.2L398.0,97.9ZM395.1,114.9L397.9,117.2L398.7,114.0ZM395.5,117.2L398.3,119.7L399.2,116.5ZM392.6,91.6L396.0,91.5L395.3,89.5ZM392.1,106.8L394.9,109.3L395.7,106.1ZM389.4,92.1L393.0,92.4L391.8,89.4ZM385.2,108.7L387.7,111.1L388.7,109.2ZM382.6,108.2L384.6,111.2L386.2,108.3ZM380.1,107.6L381.9,110.8L383.7,108.0ZM371.4,89.5L374.7,91.2L374.7,87.9ZM362.8,89.6L366.1,91.2L366.1,87.9ZM357.0,89.6L360.3,91.2L360.2,87.9ZM349.7,89.7L353.1,90.7L353.0,88.5ZM319.4,118.3L322.0,115.7L318.9,114.7ZM304.1,96.4L307.8,96.8L306.6,93.7ZM307.6,115.2L310.5,112.9L307.5,111.5ZM293.4,101.8L297.1,101.3L295.2,98.6ZM294.2,106.8L297.7,105.6L295.4,103.3ZM295.3,111.1L298.1,109.0L296.3,107.7Z"/>
<path fill="none" stroke="#aae61e" d="M23.6,99.5L23.9,104.1M23.6,102.5L23.9,106.7M37.0,114.0L37.9,118.6M37.0,116.5L37.9,120.7M49.6,116.5L50.9,121.1M49.6,119.0L50.9,123.1M76.0,105.5L80.1,105.5M82.5,102.5L86.7,102.4M82.5,105.5L86.9,105.2M82.5,108.5L86.8,108.0M82.5,111.5L86.7,110.8M82.5,114.0L86.6,113.2M86.0,92.5L90.1,93.6M86.0,96.0L90.8,96.7M86.0,102.5L90.9,102.2M86.0,105.5L90.7,104.7M88.5,108.5L92.5,107.3M91.0,89.5L95.3,91.4M100.5,112.0L104.5,112.5M103.0,112.0L107.3,112.6M110.0,89.5L114.1,89.5M151.5,112.0L153.4,115.9M163.0,94.0L167.5,95.6M163.0,109.0L165.3,113.2M174.0,98.0L177.9,100.6M174.0,102.0L177.4,105.3M174.0,105.8L176.5,109.3M460.9,99.5L460.6,104.1M460.9,102.5L460.6,106.7M447.5,114.0L446.6,118.6M447.5,116.5L446.6,120.7M434.9,116.5L433.6,121.1M434.9,119.0L433.6,123.1M408.5,105.5L404.4,105.5M402.0,102.5L397.8,102.4M402.0,105.5L397.6,105.2M402.0,108.5L397.7,108.0M402.0,111.5L397.8,110.8M402.0,114.0L397.9,113.2M398.5,92.5L394.4,93.6M398.5,96.0L393.7,96.7M398.5,102.5L393.6,102.2M398.5,105.5L393.8,104.7M396.0,108.5L392.0,107.3M393.5,89.5L389.2,91.4M384.0,112.0L380.0,112.5M381.5,112.0L377.2,112.6M374.5,89.5L370.4,89.5M333.0,112.0L331.1,115.9M321.5,94.0L317.0,95.6M321.5,109.0L319.2,113.2M310.5,98.0L306.6,100.6M310.5,102.0L307.1,105.3M310.5,105.8L308.0,109.3"/>
<path fill="#aae61e" stroke="#aae61e" stroke-width="0.4" d="M24.2,107.4L22.3,104.2L25.6,104.0ZM24.2,110.0L22.3,106.8L25.6,106.5ZM38.6,121.8L36.3,118.9L39.6,118.3ZM38.7,123.9L36.3,121.0L39.5,120.3ZM51.8,124.2L49.3,121.5L52.5,120.6ZM51.8,126.3L49.3,123.6L52.4,122.6ZM83.4,105.5L80.1,107.2L80.1,103.8ZM90.0,102.2L86.8,104.0L86.7,100.7ZM90.2,104.9L87.1,106.8L86.8,103.5ZM90.1,107.6L87.0,109.6L86.6,106.3ZM90.0,110.3L87.0,112.4L86.5,109.2ZM89.9,112.5L86.9,114.8L86.3,111.6ZM93.3,94.4L89.7,95.2L90.5,92.0ZM94.1,97.2L90.6,98.3L91.0,95.1ZM94.2,102.0L91.0,103.8L90.8,100.5ZM93.9,104.2L90.9,106.4L90.4,103.1ZM95.7,106.4L93.0,108.9L92.1,105.8ZM98.3,92.7L94.6,92.9L95.9,89.8ZM107.8,112.9L104.3,114.1L104.7,110.9ZM110.5,113.0L107.0,114.2L107.5,110.9ZM117.4,89.6L114.0,91.2L114.1,87.9ZM154.9,118.9L151.9,116.7L154.9,115.2ZM170.6,96.7L166.9,97.1L168.1,94.0ZM166.8,116.1L163.8,114.0L166.7,112.4ZM180.7,102.5L177.0,102.0L178.8,99.3ZM179.8,107.6L176.2,106.5L178.5,104.1ZM178.4,112.0L175.2,110.2L177.9,108.3ZM460.3,107.4L462.2,104.2L458.9,104.0ZM460.3,110.0L462.2,106.8L458.9,106.5ZM445.9,121.8L448.2,118.9L444.9,118.3ZM445.8,123.9L448.2,121.0L445.0,120.3ZM432.7,124.2L435.2,121.5L432.0,120.6ZM432.7,126.3L435.2,123.6L432.1,122.6ZM401.1,105.5L404.4,107.2L404.4,103.8ZM394.5,102.2L397.7,104.0L397.8,100.7ZM394.3,104.9L397.4,106.8L397.7,103.5ZM394.4,107.6L397.5,109.6L397.9,106.3ZM394.5,110.3L397.5,112.4L398.0,109.2ZM394.6,112.5L397.6,114.8L398.2,111.6ZM391.2,94.4L394.8,95.2L394.0,92.0ZM390.4,97.2L393.9,98.3L393.5,95.1ZM390.3,102.0L393.5,103.8L393.7,100.5ZM390.6,104.2L393.6,106.4L394.1,103.1ZM388.8,106.4L391.5,108.9L392.4,105.8ZM386.2,92.7L389.9,92.9L388.6,89.8ZM376.7,112.9L380.2,114.1L379.8,110.9ZM374.0,113.0L377.5,114.2L377.0,110.9ZM367.1,89.6L370.5,91.2L370.4,87.9ZM329.6,118.9L332.6,116.7L329.6,115.2ZM313.9,96.7L317.6,97.1L316.4,94.0ZM317.7,116.1L320.7,114.0L317.8,112.4ZM303.8,102.5L307.5,102.0L305.7,99.3ZM304.7,107.6L308.3,106.5L306.0,104.1ZM306.1,112.0L309.3,110.2L306.6,108.3Z"/>
<path fill="none" stroke="#f5f028" d="M23.6,86.5L23.8,92.2M23.6,89.5L23.8,94.9M23.6,92.5L23.9,97.8M23.6,96.0L23.9,101.1M37.0,96.0L37.6,101.7M37.0,99.5L37.6,105.1M37.0,102.5L37.7,108.1M37.0,105.5L37.8,111.0M37.0,108.5L37.9,113.9M37.0,111.5L38.0,116.6M49.6,75.0L49.8,80.6M49.6,78.0L49.9,83.6M49.6,81.0L49.9,86.6M49.6,84.0L50.0,89.6M49.6,86.5L50.0,92.1M49.6,89.5L50.1,95.0M49.6,92.5L50.2,98.0M49.6,96.0L50.3,101.5M49.6,99.5L50.4,105.0M49.6,102.5L50.5,107.9M49.6,105.5L50.6,110.9M49.6,108.5L50.7,113.9M49.6,111.5L50.9,116.8M49.6,114.0L50.9,119.0M86.0,99.5L91.1,99.7M88.5,92.5L93.5,93.9M88.5,96.0L94.3,96.9M88.5,102.5L94.5,102.1M88.5,105.5L94.2,104.5M91.0,108.5L95.8,107.0M93.5,89.5L98.3,91.9M93.5,108.5L99.0,106.5M96.0,89.5L101.2,92.4M100.5,89.5L106.0,89.5M103.0,89.5L108.8,89.5M106.0,112.0L111.8,112.9M115.0,112.0L120.2,113.4M121.0,112.0L125.8,113.9M128.4,112.0L132.5,115.9M140.0,112.0L143.0,116.3M151.5,94.0L157.2,95.8M151.5,109.0L154.9,113.9M163.0,105.8L166.5,110.3M460.9,86.5L460.7,92.2M460.9,89.5L460.7,94.9M460.9,92.5L460.6,97.8M460.9,96.0L460.6,101.1M447.5,96.0L446.9,101.7M447.5,99.5L446.9,105.1M447.5,102.5L446.8,108.1M447.5,105.5L446.7,111.0M447.5,108.5L446.6,113.9M447.5,111.5L446.5,116.6M434.9,75.0L434.7,80.6M434.9,78.0L434.6,83.6M434.9,81.0L434.6,86.6M434.9,84.0L434.5,89.6M434.9,86.5L434.5,92.1M434.9,89.5L434.4,95.0M434.9,92.5L434.3,98.0M434.9,96.0L434.2,101.5M434.9,99.5L434.1,105.0M434.9,102.5L434.0,107.9M434.9,105.5L433.9,110.9M434.9,108.5L433.8,113.9M434.9,111.5L433.6,116.8M434.9,114.0L433.6,119.0M398.5,99.5L393.4,99.7M396.0,92.5L391.0,93.9M396.0,96.0L390.2,96.9M396.0,102.5L390.0,102.1M396.0,105.5L390.3,104.5M393.5,108.5L388.7,107.0M391.0,89.5L386.2,91.9M391.0,108.5L385.5,106.5M388.5,89.5L383.3,92.4M384.0,89.5L378.5,89.5M381.5,89.5L375.7,89.5M378.5,112.0L372.7,112.9M369.5,112.0L364.3,113.4M363.5,112.0L358.7,113.9M356.1,112.0L352.0,115.9M344.5,112.0L341.5,116.3M333.0,94.0L327.3,95.8M333.0,109.0L329.6,113.9M321.5,105.8L318.0,110.3"/>
<path fill="#f5f028" stroke="#f5f028" stroke-width="0.4" d="M23.9,95.5L22.2,92.2L25.5,92.1ZM24.0,98.2L22.2,95.0L25.5,94.9ZM24.0,101.1L22.2,97.9L25.5,97.7ZM24.1,104.4L22.3,101.2L25.6,101.0ZM37.9,105.0L35.9,101.8L39.2,101.5ZM38.0,108.4L36.0,105.3L39.3,104.9ZM38.1,111.3L36.1,108.3L39.4,107.8ZM38.3,114.3L36.2,111.2L39.4,110.8ZM38.4,117.2L36.3,114.2L39.5,113.6ZM38.6,119.8L36.3,116.9L39.6,116.3ZM49.9,83.9L48.1,80.7L51.4,80.6ZM50.0,86.9L48.2,83.7L51.5,83.5ZM50.1,89.9L48.3,86.7L51.6,86.5ZM50.2,92.9L48.3,89.7L51.6,89.5ZM50.3,95.3L48.4,92.2L51.7,91.9ZM50.4,98.3L48.4,95.2L51.7,94.9ZM50.5,101.3L48.5,98.2L51.8,97.8ZM50.7,104.8L48.6,101.7L51.9,101.3ZM50.9,108.2L48.8,105.2L52.0,104.7ZM51.0,111.2L48.8,108.2L52.1,107.7ZM51.2,114.2L49.0,111.2L52.2,110.6ZM51.4,117.1L49.1,114.2L52.3,113.5ZM51.6,120.0L49.2,117.2L52.5,116.4ZM51.7,122.2L49.3,119.4L52.5,118.6ZM94.4,99.8L91.1,101.3L91.2,98.0ZM96.7,94.9L93.1,95.5L94.0,92.4ZM97.6,97.5L94.1,98.6L94.6,95.3ZM97.8,101.8L94.6,103.7L94.4,100.4ZM97.4,103.9L94.5,106.1L93.9,102.9ZM99.0,105.9L96.3,108.5L95.3,105.4ZM101.3,93.3L97.6,93.4L99.1,90.4ZM102.1,105.4L99.6,108.1L98.4,105.0ZM104.1,94.0L100.4,93.9L102.0,91.0ZM109.3,89.5L106.0,91.2L106.0,87.9ZM112.1,89.6L108.8,91.2L108.8,87.9ZM115.1,113.4L111.6,114.5L112.1,111.3ZM123.4,114.3L119.8,115.0L120.7,111.8ZM128.9,115.2L125.2,115.5L126.4,112.4ZM134.8,118.2L131.3,117.1L133.6,114.7ZM144.9,119.0L141.6,117.2L144.3,115.3ZM160.4,96.8L156.7,97.4L157.7,94.2ZM156.8,116.6L153.6,114.9L156.3,113.0ZM168.6,112.9L165.2,111.3L167.8,109.2ZM460.6,95.5L462.3,92.2L459.0,92.1ZM460.5,98.2L462.3,95.0L459.0,94.9ZM460.5,101.1L462.3,97.9L459.0,97.7ZM460.4,104.4L462.2,101.2L458.9,101.0ZM446.6,105.0L448.6,101.8L445.3,101.5ZM446.5,108.4L448.5,105.3L445.2,104.9ZM446.4,111.3L448.4,108.3L445.1,107.8ZM446.2,114.3L448.3,111.2L445.1,110.8ZM446.1,117.2L448.2,114.2L445.0,113.6ZM445.9,119.8L448.2,116.9L444.9,116.3ZM434.6,83.9L436.4,80.7L433.1,80.6ZM434.5,86.9L436.3,83.7L433.0,83.5ZM434.4,89.9L436.2,86.7L432.9,86.5ZM434.3,92.9L436.2,89.7L432.9,89.5ZM434.2,95.3L436.1,92.2L432.8,91.9ZM434.1,98.3L436.1,95.2L432.8,94.9ZM434.0,101.3L436.0,98.2L432.7,97.8ZM433.8,104.8L435.9,101.7L432.6,101.3ZM433.6,108.2L435.7,105.2L432.5,104.7ZM433.5,111.2L435.7,108.2L432.4,107.7ZM433.3,114.2L435.5,111.2L432.3,110.6ZM433.1,117.1L435.4,114.2L432.2,113.5ZM432.9,120.0L435.3,117.2L432.0,116.4ZM432.8,122.2L435.2,119.4L432.0,118.6ZM390.1,99.8L393.4,101.3L393.3,98.0ZM387.8,94.9L391.4,95.5L390.5,92.4ZM386.9,97.5L390.4,98.6L389.9,95.3ZM386.7,101.8L389.9,103.7L390.1,100.4ZM387.1,103.9L390.0,106.1L390.6,102.9ZM385.5,105.9L388.2,108.5L389.2,105.4ZM383.2,93.3L386.9,93.4L385.4,90.4ZM382.4,105.4L384.9,108.1L386.1,105.0ZM380.4,94.0L384.1,93.9L382.5,91.0ZM375.2,89.5L378.5,91.2L378.5,87.9ZM372.4,89.6L375.7,91.2L375.7,87.9ZM369.4,113.4L372.9,114.5L372.4,111.3ZM361.1,114.3L364.7,115.0L363.8,111.8ZM355.6,115.2L359.3,115.5L358.1,112.4ZM349.7,118.2L353.2,117.1L350.9,114.7ZM339.6,119.0L342.9,117.2L340.2,115.3ZM324.1,96.8L327.8,97.4L326.8,94.2ZM327.7,116.6L330.9,114.9L328.2,113.0ZM315.9,112.9L319.3,111.3L316.7,109.2Z"/>
<path fill="none" stroke="#ffd700" d="M23.6,75.0L23.7,81.3M23.6,78.0L23.7,84.3M23.6,81.0L23.8,87.2M23.6,84.0L23.8,90.2M37.0,75.0L37.2,81.7M37.0,78.0L37.2,84.7M37.0,81.0L37.3,87.7M37.0,84.0L37.4,90.7M37.0,86.5L37.4,93.1M37.0,89.5L37.5,96.1M37.0,92.5L37.5,99.1M88.5,99.5L94.7,99.7M91.0,92.5L97.0,94.4M91.0,96.0L97.9,97.3M91.0,105.5L97.7,104.2M96.0,108.5L101.9,106.0M98.5,89.5L103.8,93.0M98.5,108.5L104.6,105.5M100.5,109.0L107.5,109.8M110.0,112.0L116.2,113.1M140.0,94.0L146.8,95.8M140.0,109.0L144.8,114.2M151.5,105.8L156.4,110.9M163.0,98.0L168.2,101.3M163.0,102.0L167.6,106.2M460.9,75.0L460.8,81.3M460.9,78.0L460.8,84.3M460.9,81.0L460.7,87.2M460.9,84.0L460.7,90.2M447.5,75.0L447.3,81.7M447.5,78.0L447.3,84.7M447.5,81.0L447.2,87.7M447.5,84.0L447.1,90.7M447.5,86.5L447.1,93.1M447.5,89.5L447.0,96.1M447.5,92.5L447.0,99.1M396.0,99.5L389.8,99.7M393.5,92.5L387.5,94.4M393.5,96.0L386.6,97.3M393.5,105.5L386.8,104.2M388.5,108.5L382.6,106.0M386.0,89.5L380.7,93.0M386.0,108.5L379.9,105.5M384.0,109.0L377.0,109.8M374.5,112.0L368.3,113.1M344.5,94.0L337.7,95.8M344.5,109.0L339.7,114.2M333.0,105.8L328.1,110.9M321.5,98.0L316.3,101.3M321.5,102.0L316.9,106.2"/>
<path fill="#ffd700" stroke="#ffd700" stroke-width="0.4" d="M23.8,84.6L22.1,81.4L25.4,81.3ZM23.8,87.6L22.1,84.3L25.4,84.3ZM23.9,90.5L22.1,87.3L25.4,87.2ZM23.9,93.5L22.2,90.2L25.5,90.1ZM37.3,85.0L35.5,81.8L38.8,81.7ZM37.4,88.0L35.6,84.8L38.9,84.6ZM37.4,91.0L35.7,87.8L38.9,87.6ZM37.5,93.9L35.7,90.7L39.0,90.6ZM37.6,96.4L35.8,93.2L39.0,93.0ZM37.7,99.4L35.8,96.2L39.1,96.0ZM37.8,102.4L35.9,99.2L39.2,98.9ZM98.0,99.8L94.7,101.4L94.8,98.1ZM100.1,95.4L96.5,96.0L97.5,92.8ZM101.1,97.8L97.6,98.9L98.2,95.6ZM100.9,103.5L98.0,105.8L97.4,102.5ZM105.0,104.8L102.6,107.6L101.3,104.5ZM106.5,94.8L102.9,94.4L104.7,91.6ZM107.6,104.1L105.4,107.0L103.9,104.0ZM110.8,110.1L107.4,111.4L107.7,108.1ZM119.4,113.6L115.9,114.7L116.5,111.5ZM150.0,96.7L146.4,97.4L147.2,94.2ZM147.0,116.6L143.5,115.3L146.0,113.1ZM158.7,113.3L155.2,112.0L157.6,109.8ZM171.0,103.1L167.3,102.7L169.1,99.9ZM170.0,108.4L166.5,107.4L168.7,104.9ZM460.7,84.6L462.4,81.4L459.1,81.3ZM460.7,87.6L462.4,84.3L459.1,84.3ZM460.6,90.5L462.4,87.3L459.1,87.2ZM460.6,93.5L462.3,90.2L459.0,90.1ZM447.2,85.0L449.0,81.8L445.7,81.7ZM447.1,88.0L448.9,84.8L445.6,84.6ZM447.1,91.0L448.8,87.8L445.6,87.6ZM447.0,93.9L448.8,90.7L445.5,90.6ZM446.9,96.4L448.7,93.2L445.5,93.0ZM446.8,99.4L448.7,96.2L445.4,96.0ZM446.7,102.4L448.6,99.2L445.3,98.9ZM386.5,99.8L389.8,101.4L389.7,98.1ZM384.4,95.4L388.0,96.0L387.0,92.8ZM383.4,97.8L386.9,98.9L386.3,95.6ZM383.6,103.5L386.5,105.8L387.1,102.5ZM379.5,104.8L381.9,107.6L383.2,104.5ZM378.0,94.8L381.6,94.4L379.8,91.6ZM376.9,104.1L379.1,107.0L380.6,104.0ZM373.7,110.1L377.1,111.4L376.8,108.1ZM365.1,113.6L368.6,114.7L368.0,111.5ZM334.5,96.7L338.1,97.4L337.3,94.2ZM337.5,116.6L341.0,115.3L338.5,113.1ZM325.8,113.3L329.3,112.0L326.9,109.8ZM313.5,103.1L317.2,102.7L315.4,99.9ZM314.5,108.4L318.0,107.4L315.8,104.9Z"/>
<path fill="none" stroke="#ffa500" d="M91.0,99.5L98.3,99.8M91.0,102.5L98.1,101.9M93.5,92.5L100.2,94.9M93.5,96.0L101.3,97.6M93.5,102.5L101.6,101.8M93.5,105.5L101.1,103.8M96.0,92.5L103.2,95.5M100.5,94.0L108.4,94.3M103.0,109.0L110.4,109.9M106.0,94.0L114.0,94.3M115.0,94.0L122.4,94.5M115.0,109.0L122.9,110.9M121.0,94.0L128.1,94.7M121.0,109.0L128.4,111.5M128.4,94.0L135.8,95.6M128.4,109.0L134.3,113.6M151.5,98.0L158.2,101.7M151.5,102.0L157.6,106.7M393.5,99.5L386.2,99.8M393.5,102.5L386.4,101.9M391.0,92.5L384.3,94.9M391.0,96.0L383.2,97.6M391.0,102.5L382.9,101.8M391.0,105.5L383.4,103.8M388.5,92.5L381.3,95.5M384.0,94.0L376.1,94.3M381.5,109.0L374.1,109.9M378.5,94.0L370.5,94.3M369.5,94.0L362.1,94.5M369.5,109.0L361.6,110.9M363.5,94.0L356.4,94.7M363.5,109.0L356.1,111.5M356.1,94.0L348.7,95.6M356.1,109.0L350.2,113.6M333.0,98.0L326.3,101.7M333.0,102.0L326.9,106.7"/>
<path fill="#ffa500" stroke="#ffa500" stroke-width="0.4" d="M101.6,99.9L98.3,101.4L98.4,98.1ZM101.4,101.7L98.2,103.6L98.0,100.3ZM103.3,96.0L99.7,96.5L100.8,93.4ZM104.5,98.3L101.0,99.2L101.6,96.0ZM104.9,101.5L101.7,103.4L101.4,100.1ZM104.3,103.0L101.5,105.4L100.7,102.2ZM106.3,96.8L102.6,97.0L103.8,94.0ZM111.7,94.4L108.4,95.9L108.5,92.6ZM113.7,110.3L110.2,111.5L110.6,108.2ZM117.3,94.5L113.9,96.0L114.1,92.7ZM125.7,94.8L122.3,96.2L122.5,92.9ZM126.1,111.6L122.5,112.5L123.2,109.3ZM131.4,95.1L127.9,96.4L128.3,93.1ZM131.5,112.6L127.8,113.1L128.9,110.0ZM139.0,96.3L135.4,97.2L136.1,94.0ZM136.9,115.7L133.3,114.9L135.4,112.3ZM161.1,103.3L157.4,103.2L159.0,100.3ZM160.2,108.7L156.6,108.0L158.6,105.4ZM382.9,99.9L386.2,101.4L386.1,98.1ZM383.1,101.7L386.3,103.6L386.5,100.3ZM381.2,96.0L384.8,96.5L383.7,93.4ZM380.0,98.3L383.5,99.2L382.9,96.0ZM379.6,101.5L382.8,103.4L383.1,100.1ZM380.2,103.0L383.0,105.4L383.8,102.2ZM378.2,96.8L381.9,97.0L380.7,94.0ZM372.8,94.4L376.1,95.9L376.0,92.6ZM370.8,110.3L374.3,111.5L373.9,108.2ZM367.2,94.5L370.6,96.0L370.4,92.7ZM358.8,94.8L362.2,96.2L362.0,92.9ZM358.4,111.6L362.0,112.5L361.3,109.3ZM353.1,95.1L356.6,96.4L356.2,93.1ZM353.0,112.6L356.7,113.1L355.6,110.0ZM345.5,96.3L349.1,97.2L348.4,94.0ZM347.6,115.7L351.2,114.9L349.1,112.3ZM323.4,103.3L327.1,103.2L325.5,100.3ZM324.3,108.7L327.9,108.0L325.9,105.4Z"/>
<path fill="none" stroke="#ff7d00" d="M93.5,99.5L101.8,99.9M96.0,96.0L104.4,98.0M96.0,99.5L105.1,100.0M96.0,102.5L104.8,101.6M96.0,105.5L104.2,103.3M98.5,92.5L105.9,96.1M98.5,96.0L107.3,98.5M98.5,105.5L107.1,102.8M100.5,98.0L109.4,98.5M100.5,102.0L109.4,102.6M100.5,105.8L109.1,106.5M103.0,94.0L111.3,94.3M103.0,105.8L112.1,106.7M106.0,109.0L114.6,110.1M110.0,94.0L118.5,94.4M110.0,109.0L119.1,110.4M128.4,105.8L135.9,110.4M140.0,98.0L148.0,101.8M140.0,102.0L147.5,106.8M140.0,105.8L146.3,111.1M391.0,99.5L382.7,99.9M388.5,96.0L380.1,98.0M388.5,99.5L379.4,100.0M388.5,102.5L379.7,101.6M388.5,105.5L380.3,103.3M386.0,92.5L378.6,96.1M386.0,96.0L377.2,98.5M386.0,105.5L377.4,102.8M384.0,98.0L375.1,98.5M384.0,102.0L375.1,102.6M384.0,105.8L375.4,106.5M381.5,94.0L373.2,94.3M381.5,105.8L372.4,106.7M378.5,109.0L369.9,110.1M374.5,94.0L366.0,94.4M374.5,109.0L365.4,110.4M356.1,105.8L348.6,110.4M344.5,98.0L336.5,101.8M344.5,102.0L337.0,106.8M344.5,105.8L338.2,111.1"/>
<path fill="#ff7d00" stroke="#ff7d00" stroke-width="0.4" d="M105.1,100.0L101.7,101.5L101.9,98.2ZM107.7,98.8L104.1,99.6L104.8,96.4ZM108.3,100.2L105.0,101.6L105.1,98.3ZM108.1,101.2L105.0,103.2L104.6,99.9ZM107.4,102.5L104.6,104.9L103.8,101.7ZM108.9,97.6L105.2,97.6L106.6,94.6ZM110.5,99.4L106.9,100.1L107.8,96.9ZM110.2,101.9L107.5,104.4L106.6,101.3ZM112.7,98.7L109.3,100.1L109.5,96.9ZM112.7,102.9L109.3,104.3L109.5,101.0ZM112.4,106.8L109.0,108.2L109.3,104.9ZM114.6,94.4L111.3,96.0L111.4,92.7ZM115.3,107.0L111.9,108.3L112.2,105.0ZM117.9,110.6L114.4,111.8L114.8,108.5ZM121.8,94.6L118.4,96.0L118.5,92.8ZM122.4,110.9L118.9,112.0L119.3,108.7ZM138.7,112.2L135.0,111.8L136.8,109.0ZM151.0,103.1L147.3,103.2L148.7,100.3ZM150.3,108.5L146.6,108.2L148.4,105.4ZM148.9,113.2L145.3,112.3L147.4,109.8ZM379.4,100.0L382.8,101.5L382.6,98.2ZM376.8,98.8L380.4,99.6L379.7,96.4ZM376.2,100.2L379.5,101.6L379.4,98.3ZM376.4,101.2L379.5,103.2L379.9,99.9ZM377.1,102.5L379.9,104.9L380.7,101.7ZM375.6,97.6L379.3,97.6L377.9,94.6ZM374.0,99.4L377.6,100.1L376.7,96.9ZM374.3,101.9L377.0,104.4L377.9,101.3ZM371.8,98.7L375.2,100.1L375.0,96.9ZM371.8,102.9L375.2,104.3L375.0,101.0ZM372.1,106.8L375.5,108.2L375.2,104.9ZM369.9,94.4L373.2,96.0L373.1,92.7ZM369.2,107.0L372.6,108.3L372.3,105.0ZM366.6,110.6L370.1,111.8L369.7,108.5ZM362.7,94.6L366.1,96.0L366.0,92.8ZM362.1,110.9L365.6,112.0L365.2,108.7ZM345.8,112.2L349.5,111.8L347.7,109.0ZM333.5,103.1L337.2,103.2L335.8,100.3ZM334.2,108.5L337.9,108.2L336.1,105.4ZM335.6,113.2L339.2,112.3L337.1,109.8Z"/>
<path fill="none" stroke="#ff5a00" d="M98.5,99.5L108.0,100.1M98.5,102.5L107.7,101.3M103.0,98.0L112.3,98.6M103.0,102.0L112.3,102.8M115.0,98.0L124.6,99.2M115.0,102.0L125.0,103.6M115.0,105.8L124.5,107.6M121.0,98.0L130.2,99.6M121.0,102.0L130.5,104.2M121.0,105.8L130.0,108.3M128.4,98.0L137.3,101.2M128.4,102.0L136.9,106.1M386.0,99.5L376.5,100.1M386.0,102.5L376.8,101.3M381.5,98.0L372.2,98.6M381.5,102.0L372.2,102.8M369.5,98.0L359.9,99.2M369.5,102.0L359.5,103.6M369.5,105.8L360.0,107.6M363.5,98.0L354.3,99.6M363.5,102.0L354.0,104.2M363.5,105.8L354.5,108.3M356.1,98.0L347.2,101.2M356.1,102.0L347.6,106.1"/>
<path fill="#ff5a00" stroke="#ff5a00" stroke-width="0.4" d="M111.3,100.3L107.9,101.7L108.1,98.5ZM111.0,100.9L108.0,103.0L107.5,99.7ZM115.6,98.8L112.2,100.2L112.4,96.9ZM115.6,103.0L112.2,104.4L112.5,101.1ZM127.9,99.6L124.4,100.8L124.8,97.5ZM128.2,104.1L124.7,105.2L125.2,102.0ZM127.7,108.3L124.2,109.3L124.8,106.0ZM133.5,100.2L129.9,101.3L130.5,98.0ZM133.7,104.9L130.1,105.8L130.9,102.6ZM133.2,109.2L129.5,109.9L130.5,106.7ZM140.4,102.4L136.7,102.8L137.9,99.7ZM139.9,107.6L136.2,107.6L137.6,104.7ZM373.2,100.3L376.6,101.7L376.4,98.5ZM373.5,100.9L376.5,103.0L377.0,99.7ZM368.9,98.8L372.3,100.2L372.1,96.9ZM368.9,103.0L372.3,104.4L372.0,101.1ZM356.6,99.6L360.1,100.8L359.7,97.5ZM356.3,104.1L359.8,105.2L359.3,102.0ZM356.8,108.3L360.3,109.3L359.7,106.0ZM351.0,100.2L354.6,101.3L354.0,98.0ZM350.8,104.9L354.4,105.8L353.6,102.6ZM351.3,109.2L355.0,109.9L354.0,106.7ZM344.1,102.4L347.8,102.8L346.6,99.7ZM344.6,107.6L348.3,107.6L346.9,104.7Z"/>
<path fill="none" stroke="#ff0000" d="M106.0,98.0L116.4,98.7M106.0,102.0L116.8,103.0M106.0,105.8L116.3,106.9M110.0,98.0L120.9,98.9M110.0,102.0L121.3,103.2M110.0,105.8L120.9,107.1M378.5,98.0L368.1,98.7M378.5,102.0L367.7,103.0M378.5,105.8L368.2,106.9M374.5,98.0L363.6,98.9M374.5,102.0L363.2,103.2M374.5,105.8L363.6,107.1"/>
<path fill="#ff0000" stroke="#ff0000" stroke-width="0.4" d="M119.7,98.9L116.3,100.4L116.5,97.1ZM120.1,103.3L116.6,104.6L116.9,101.3ZM119.6,107.3L116.2,108.5L116.5,105.3ZM124.2,99.1L120.8,100.5L121.1,97.2ZM124.6,103.5L121.2,104.8L121.5,101.5ZM124.2,107.5L120.7,108.8L121.1,105.5ZM364.8,98.9L368.2,100.4L368.0,97.1ZM364.4,103.3L367.9,104.6L367.6,101.3ZM364.9,107.3L368.3,108.5L368.0,105.3ZM360.3,99.1L363.7,100.5L363.4,97.2ZM359.9,103.5L363.3,104.8L363.0,101.5ZM360.3,107.5L363.8,108.8L363.4,105.5Z"/>
</g>
<g fill="none" stroke="#a8a8a8" stroke-width="1" shape-rendering="crispEdges">
<path d="M55.5,68.5H429.5V84.5H55.5Z M99.5,68.5V84.5 M385.5,68.5V84.5"/>
<path d="M99.5,177V116.5H385.5V177"/>
<path d="M8.5,68V178 M476.5,68V178"/>
</g>
<rect x="99" y="176" width="287" height="2" fill="#a8a8a8"/>
<g fill="#00ac00">
<rect x="8" y="67" width="47" height="2"/><rect x="430" y="67" width="47" height="2"/>
<rect x="8" y="176" width="91" height="2"/><rect x="386" y="176" width="91" height="2"/>
</g>
<path d="M84,197.5H120 M116.5,195.5L120.5,197.5L116.5,199.5" stroke="#ececec" stroke-width="1" fill="none"/>
<defs><clipPath id="tc"><rect x="8" y="287" width="40" height="11"/><rect x="8" y="297" width="90" height="83"/><rect x="97" y="297" width="288" height="31"/><rect x="384" y="297" width="89" height="83"/><rect x="433" y="287" width="40" height="11"/></clipPath></defs>
<g clip-path="url(#tc)">
<rect x="0" y="280" width="482" height="110" fill="#0000ff"/>
<path d="M40.5,381.0 40.5,377.9 40.5,373.4 40.4,368.2 40.4,362.9 40.4,357.9 40.5,354.0 40.6,351.1 40.7,348.8 40.9,346.9 41.1,345.2 41.3,343.7 41.5,342.0 41.8,340.3 42.1,338.7 42.4,337.2 42.8,335.8 43.1,334.4 43.5,333.0 43.9,331.7 44.2,330.4 44.6,329.1 45.0,327.9 45.5,326.7 46.0,325.5 46.6,324.3 47.2,323.1 47.8,321.9 48.5,320.7 49.3,319.6 50.0,318.5 50.8,317.5 51.6,316.5 52.4,315.5 53.3,314.6 54.1,313.8 55.0,313.0 55.9,312.3 56.8,311.6 57.7,311.0 58.6,310.4 59.6,309.9 60.5,309.3 61.4,308.7 62.4,308.1 63.3,307.5 64.2,307.0 65.1,306.5 66.0,306.0 66.9,305.6 67.7,305.2 68.5,304.9 69.3,304.6 70.1,304.3 71.0,304.0 71.9,303.7 72.9,303.3 73.8,303.0 74.8,302.7 75.9,302.3 77.0,302.0 78.2,301.7 79.5,301.4 80.9,301.0 82.3,300.7 83.6,300.5 85.0,300.2 86.3,300.0 87.6,299.7 88.8,299.5 90.1,299.4 91.5,299.2 93.0,299.0 94.6,298.8 96.4,298.7 98.2,298.5 100.1,298.3 102.0,298.2 104.0,298.0 106.2,297.8 108.7,297.7 111.2,297.5 113.6,297.3 115.6,297.2 117.0,297.0 117.8,296.8 118.0,296.6 117.8,296.4 117.5,296.3 117.2,296.1 117.0,296.0 365.0,296.0 364.8,296.1 364.5,296.3 364.2,296.4 364.0,296.6 364.2,296.8 365.0,297.0 366.4,297.2 368.4,297.3 370.8,297.5 373.3,297.7 375.8,297.8 378.0,298.0 380.0,298.2 381.9,298.3 383.8,298.5 385.6,298.7 387.4,298.8 389.0,299.0 390.5,299.2 391.9,299.4 393.2,299.5 394.4,299.7 395.7,300.0 397.0,300.2 398.4,300.5 399.7,300.7 401.1,301.0 402.5,301.4 403.8,301.7 405.0,302.0 406.1,302.3 407.2,302.7 408.2,303.0 409.1,303.3 410.1,303.7 411.0,304.0 411.9,304.3 412.7,304.6 413.5,304.9 414.3,305.2 415.1,305.6 416.0,306.0 416.9,306.5 417.8,307.0 418.7,307.5 419.6,308.1 420.6,308.7 421.5,309.3 422.4,309.9 423.4,310.4 424.3,311.0 425.2,311.6 426.1,312.3 427.0,313.0 427.9,313.8 428.7,314.6 429.6,315.5 430.4,316.5 431.2,317.5 432.0,318.5 432.7,319.6 433.5,320.7 434.2,321.9 434.8,323.1 435.4,324.3 436.0,325.5 436.5,326.7 437.0,327.9 437.4,329.1 437.8,330.4 438.1,331.7 438.5,333.0 438.9,334.4 439.2,335.8 439.6,337.2 439.9,338.7 440.2,340.3 440.5,342.0 440.7,343.7 440.9,345.2 441.1,346.9 441.3,348.8 441.4,351.1 441.5,354.0 441.6,357.9 441.6,362.9 441.6,368.2 441.5,373.4 441.5,377.9 441.5,381.0Z" fill="#0074fc"/>
<path d="M68.8,381.0 68.5,379.2 68.1,376.7 67.7,373.8 67.3,370.7 66.8,367.7 66.5,365.0 66.2,362.6 66.0,360.2 65.7,357.9 65.5,355.8 65.4,353.8 65.2,352.0 65.1,350.5 64.9,349.2 64.8,348.1 64.7,347.1 64.7,346.1 64.6,345.0 64.6,343.8 64.5,342.6 64.5,341.4 64.5,340.3 64.6,339.1 64.6,338.0 64.7,336.9 64.7,335.9 64.8,334.8 64.9,333.9 65.1,332.9 65.2,332.0 65.3,331.2 65.5,330.4 65.7,329.7 65.9,328.9 66.1,328.2 66.3,327.5 66.5,326.8 66.8,326.0 67.0,325.2 67.3,324.5 67.6,323.8 68.0,323.0 68.4,322.2 68.9,321.5 69.4,320.7 69.9,319.9 70.4,319.2 71.0,318.5 71.6,317.8 72.2,317.2 72.8,316.6 73.4,315.9 74.1,315.3 74.8,314.8 75.4,314.2 76.2,313.6 76.9,313.0 77.7,312.5 78.4,311.9 79.2,311.4 80.1,310.9 80.9,310.4 81.8,309.9 82.7,309.4 83.6,308.9 84.5,308.4 85.5,307.9 86.4,307.5 87.4,307.0 88.4,306.6 89.5,306.2 90.5,305.8 91.5,305.4 92.6,305.0 93.7,304.6 94.8,304.3 95.9,304.0 97.0,303.7 98.1,303.4 99.3,303.2 100.4,303.0 101.6,302.7 102.8,302.5 104.0,302.3 105.2,302.1 106.4,301.9 107.6,301.6 108.9,301.4 110.4,301.2 112.0,301.0 113.9,300.8 115.9,300.6 118.1,300.3 120.3,300.1 122.7,299.9 125.0,299.8 127.6,299.7 130.4,299.7 133.3,299.6 136.0,299.6 138.3,299.6 140.0,299.6 342.0,299.6 343.7,299.6 346.0,299.6 348.7,299.6 351.6,299.7 354.4,299.7 357.0,299.8 359.3,299.9 361.7,300.1 363.9,300.3 366.1,300.6 368.1,300.8 370.0,301.0 371.6,301.2 373.1,301.4 374.4,301.6 375.6,301.9 376.8,302.1 378.0,302.3 379.2,302.5 380.4,302.7 381.6,303.0 382.7,303.2 383.9,303.4 385.0,303.7 386.1,304.0 387.2,304.3 388.3,304.6 389.4,305.0 390.5,305.4 391.5,305.8 392.5,306.2 393.6,306.6 394.6,307.0 395.6,307.5 396.5,307.9 397.5,308.4 398.4,308.9 399.3,309.4 400.2,309.9 401.1,310.4 401.9,310.9 402.8,311.4 403.6,311.9 404.3,312.5 405.1,313.0 405.8,313.6 406.6,314.2 407.2,314.8 407.9,315.3 408.6,315.9 409.2,316.6 409.8,317.2 410.4,317.8 411.0,318.5 411.6,319.2 412.1,319.9 412.6,320.7 413.1,321.5 413.6,322.2 414.0,323.0 414.4,323.8 414.7,324.5 415.0,325.2 415.2,326.0 415.5,326.8 415.7,327.5 415.9,328.2 416.1,328.9 416.3,329.7 416.5,330.4 416.7,331.2 416.8,332.0 416.9,332.9 417.1,333.9 417.2,334.8 417.3,335.9 417.3,336.9 417.4,338.0 417.4,339.1 417.5,340.3 417.5,341.4 417.5,342.6 417.4,343.8 417.4,345.0 417.3,346.1 417.3,347.1 417.2,348.1 417.1,349.2 416.9,350.5 416.8,352.0 416.6,353.8 416.5,355.8 416.3,357.9 416.0,360.2 415.8,362.6 415.5,365.0 415.2,367.7 414.7,370.7 414.3,373.8 413.9,376.7 413.5,379.2 413.2,381.0Z" fill="#069ce6"/>
<path d="M97.5,360.0 96.8,359.6 95.9,359.1 94.8,358.4 93.6,357.7 92.4,357.0 91.2,356.2 90.2,355.5 89.1,354.7 88.0,353.9 87.0,353.1 86.0,352.2 85.0,351.2 84.1,350.3 83.1,349.3 82.3,348.2 81.4,347.1 80.7,346.1 80.0,345.0 79.4,344.0 78.9,342.9 78.5,341.9 78.1,340.9 77.8,339.8 77.5,338.8 77.3,337.6 77.1,336.5 76.9,335.3 76.8,334.1 76.7,333.0 76.7,332.0 76.7,331.1 76.8,330.3 76.9,329.6 77.1,328.9 77.2,328.2 77.4,327.5 77.6,326.7 77.8,326.0 78.0,325.2 78.3,324.5 78.6,323.7 78.9,323.0 79.3,322.3 79.7,321.6 80.1,320.9 80.5,320.2 81.0,319.5 81.5,318.9 82.0,318.3 82.5,317.7 83.1,317.1 83.7,316.6 84.3,316.0 84.9,315.5 85.5,315.0 86.2,314.5 86.8,313.9 87.5,313.5 88.2,313.0 89.0,312.5 89.8,312.0 90.7,311.6 91.6,311.2 92.5,310.7 93.4,310.3 94.2,309.9 95.1,309.5 96.0,309.1 96.9,308.6 97.8,308.2 98.7,307.8 99.5,307.5 100.3,307.2 100.9,307.0 101.6,306.7 102.3,306.5 103.1,306.3 104.0,306.0 105.1,305.7 106.3,305.4 107.7,305.0 109.1,304.7 110.5,304.3 112.0,304.0 113.5,303.7 115.1,303.4 116.7,303.1 118.4,302.8 120.1,302.5 122.0,302.3 124.0,302.1 126.2,302.0 128.5,301.9 130.8,301.8 133.0,301.7 135.0,301.6 137.0,301.5 138.9,301.5 140.8,301.5 142.5,301.5 143.9,301.5 145.0,301.5 337.0,301.5 338.1,301.5 339.5,301.5 341.2,301.5 343.1,301.5 345.0,301.5 347.0,301.6 349.0,301.7 351.2,301.8 353.5,301.9 355.8,302.0 358.0,302.1 360.0,302.3 361.9,302.5 363.6,302.8 365.3,303.1 366.9,303.4 368.5,303.7 370.0,304.0 371.5,304.3 372.9,304.7 374.3,305.0 375.7,305.4 376.9,305.7 378.0,306.0 378.9,306.3 379.7,306.5 380.4,306.7 381.1,307.0 381.7,307.2 382.5,307.5 383.3,307.8 384.2,308.2 385.1,308.6 386.0,309.1 386.9,309.5 387.8,309.9 388.6,310.3 389.5,310.7 390.4,311.2 391.3,311.6 392.2,312.0 393.0,312.5 393.8,313.0 394.5,313.5 395.2,313.9 395.8,314.5 396.5,315.0 397.1,315.5 397.7,316.0 398.3,316.6 398.9,317.1 399.5,317.7 400.0,318.3 400.5,318.9 401.0,319.5 401.5,320.2 401.9,320.9 402.3,321.6 402.7,322.3 403.1,323.0 403.4,323.7 403.7,324.5 404.0,325.2 404.2,326.0 404.4,326.7 404.6,327.5 404.8,328.2 404.9,328.9 405.1,329.6 405.2,330.3 405.3,331.1 405.3,332.0 405.3,333.0 405.2,334.1 405.1,335.3 404.9,336.5 404.7,337.6 404.5,338.8 404.2,339.8 403.9,340.9 403.5,341.9 403.1,342.9 402.6,344.0 402.0,345.0 401.3,346.1 400.6,347.1 399.7,348.2 398.9,349.3 397.9,350.3 397.0,351.2 396.0,352.2 395.0,353.1 394.0,353.9 392.9,354.7 391.8,355.5 390.8,356.2 389.6,357.0 388.4,357.7 387.2,358.4 386.1,359.1 385.2,359.6 384.5,360.0Z" fill="#00c6d8"/>
<path d="M97.5,343.0 96.8,342.7 95.8,342.2 94.6,341.7 93.4,341.2 92.2,340.6 91.2,340.0 90.5,339.4 89.8,338.9 89.1,338.2 88.6,337.6 88.0,337.0 87.5,336.2 87.0,335.5 86.5,334.6 86.1,333.8 85.7,332.9 85.3,332.0 85.0,331.2 84.7,330.6 84.5,329.9 84.3,329.3 84.2,328.8 84.1,328.2 84.1,327.5 84.2,326.8 84.4,326.0 84.6,325.2 84.9,324.5 85.3,323.7 85.6,323.0 86.0,322.3 86.4,321.7 86.8,321.0 87.3,320.4 87.8,319.8 88.2,319.2 88.8,318.7 89.3,318.2 89.8,317.7 90.4,317.2 91.0,316.7 91.6,316.2 92.2,315.8 92.9,315.3 93.6,314.9 94.3,314.4 95.0,314.0 95.8,313.6 96.5,313.2 97.3,312.8 98.0,312.4 98.8,312.0 99.5,311.6 100.2,311.3 100.9,311.0 101.4,310.8 101.9,310.6 102.5,310.4 103.1,310.1 104.0,309.8 105.1,309.4 106.3,308.9 107.6,308.4 109.0,307.9 110.5,307.4 112.0,307.0 113.5,306.6 115.1,306.2 116.7,305.8 118.4,305.4 120.1,305.1 122.0,304.8 124.0,304.6 126.2,304.4 128.5,304.2 130.8,304.1 133.0,304.0 135.0,303.9 137.0,303.8 138.9,303.8 140.8,303.8 142.5,303.8 143.9,303.8 145.0,303.8 337.0,303.8 338.1,303.8 339.5,303.8 341.2,303.8 343.1,303.8 345.0,303.8 347.0,303.9 349.0,304.0 351.2,304.1 353.5,304.2 355.8,304.4 358.0,304.6 360.0,304.8 361.9,305.1 363.6,305.4 365.3,305.8 366.9,306.2 368.5,306.6 370.0,307.0 371.5,307.4 373.0,307.9 374.4,308.4 375.7,308.9 376.9,309.4 378.0,309.8 378.9,310.1 379.5,310.4 380.1,310.6 380.6,310.8 381.1,311.0 381.8,311.3 382.5,311.6 383.2,312.0 384.0,312.4 384.7,312.8 385.5,313.2 386.2,313.6 387.0,314.0 387.7,314.4 388.4,314.9 389.1,315.3 389.8,315.8 390.4,316.2 391.0,316.7 391.6,317.2 392.2,317.7 392.7,318.2 393.2,318.7 393.8,319.2 394.2,319.8 394.7,320.4 395.2,321.0 395.6,321.7 396.0,322.3 396.4,323.0 396.7,323.7 397.1,324.5 397.4,325.2 397.6,326.0 397.8,326.8 397.9,327.5 397.9,328.2 397.8,328.8 397.7,329.3 397.5,329.9 397.3,330.6 397.0,331.2 396.7,332.0 396.3,332.9 395.9,333.8 395.5,334.6 395.0,335.5 394.5,336.2 394.0,337.0 393.4,337.6 392.9,338.2 392.2,338.9 391.5,339.4 390.8,340.0 389.8,340.6 388.6,341.2 387.4,341.7 386.2,342.2 385.2,342.7 384.5,343.0Z" fill="#00d796"/>
<path d="M97.5,335.0 96.9,334.7 95.9,334.2 94.9,333.7 93.8,333.1 92.7,332.5 91.9,331.9 91.2,331.3 90.7,330.6 90.2,330.0 89.7,329.3 89.3,328.6 89.0,328.0 88.7,327.4 88.5,326.8 88.4,326.2 88.3,325.6 88.2,325.1 88.2,324.5 88.3,323.9 88.4,323.4 88.5,322.9 88.7,322.4 89.0,321.8 89.2,321.2 89.6,320.7 90.0,320.0 90.4,319.4 90.8,318.8 91.3,318.1 91.8,317.5 92.2,316.9 92.7,316.3 93.2,315.7 93.8,315.1 94.3,314.5 94.9,314.0 95.5,313.5 96.1,313.0 96.7,312.5 97.3,312.1 97.9,311.7 98.6,311.2 99.3,310.8 100.0,310.4 100.7,310.0 101.5,309.7 102.2,309.3 103.0,309.0 103.8,308.7 104.6,308.4 105.4,308.2 106.2,307.9 107.1,307.7 108.0,307.5 108.9,307.3 109.7,307.1 110.6,306.9 111.6,306.7 112.8,306.5 114.2,306.4 116.3,306.3 118.8,306.1 121.5,306.0 124.2,305.9 126.4,305.9 128.0,305.8 354.0,305.8 355.6,305.9 357.8,305.9 360.5,306.0 363.2,306.1 365.7,306.3 367.8,306.4 369.2,306.5 370.4,306.7 371.4,306.9 372.3,307.1 373.1,307.3 374.0,307.5 374.9,307.7 375.8,307.9 376.6,308.2 377.4,308.4 378.2,308.7 379.0,309.0 379.8,309.3 380.5,309.7 381.3,310.0 382.0,310.4 382.7,310.8 383.4,311.2 384.1,311.7 384.7,312.1 385.3,312.5 385.9,313.0 386.5,313.5 387.1,314.0 387.7,314.5 388.2,315.1 388.8,315.7 389.3,316.3 389.8,316.9 390.2,317.5 390.7,318.1 391.2,318.8 391.6,319.4 392.0,320.0 392.4,320.7 392.8,321.2 393.0,321.8 393.3,322.4 393.5,322.9 393.6,323.4 393.7,323.9 393.8,324.5 393.8,325.1 393.7,325.6 393.6,326.2 393.5,326.8 393.3,327.4 393.0,328.0 392.7,328.6 392.3,329.3 391.9,330.0 391.3,330.6 390.8,331.3 390.1,331.9 389.3,332.5 388.2,333.1 387.1,333.7 386.1,334.2 385.1,334.7 384.5,335.0Z" fill="#00e13c"/>
<path d="M97.5,331.5 97.0,331.2 96.3,330.9 95.4,330.4 94.5,330.0 93.7,329.5 93.1,329.0 92.6,328.5 92.2,328.1 91.9,327.6 91.7,327.1 91.5,326.5 91.3,326.0 91.2,325.4 91.2,324.9 91.2,324.3 91.2,323.7 91.4,323.1 91.5,322.5 91.7,321.9 91.9,321.3 92.2,320.7 92.6,320.1 92.9,319.6 93.3,319.0 93.7,318.4 94.1,317.9 94.5,317.4 95.0,316.8 95.5,316.3 96.0,315.8 96.5,315.3 97.1,314.8 97.7,314.3 98.3,313.9 98.9,313.4 99.6,313.0 100.3,312.6 101.0,312.2 101.7,311.8 102.5,311.5 103.2,311.1 104.0,310.8 104.8,310.5 105.5,310.2 106.3,309.9 107.2,309.7 108.0,309.4 109.0,309.2 110.0,309.0 111.0,308.8 112.1,308.5 113.2,308.3 114.5,308.2 116.0,308.0 117.8,307.8 120.1,307.7 122.4,307.6 124.7,307.5 126.6,307.4 128.0,307.3 354.0,307.3 355.4,307.4 357.3,307.5 359.6,307.6 361.9,307.7 364.2,307.8 366.0,308.0 367.5,308.2 368.8,308.3 369.9,308.5 371.0,308.8 372.0,309.0 373.0,309.2 374.0,309.4 374.8,309.7 375.7,309.9 376.5,310.2 377.2,310.5 378.0,310.8 378.8,311.1 379.5,311.5 380.3,311.8 381.0,312.2 381.7,312.6 382.4,313.0 383.1,313.4 383.7,313.9 384.3,314.3 384.9,314.8 385.5,315.3 386.0,315.8 386.5,316.3 387.0,316.8 387.5,317.4 387.9,317.9 388.3,318.4 388.7,319.0 389.1,319.6 389.4,320.1 389.8,320.7 390.1,321.3 390.3,321.9 390.5,322.5 390.6,323.1 390.8,323.7 390.8,324.3 390.8,324.9 390.8,325.4 390.7,326.0 390.5,326.5 390.3,327.1 390.1,327.6 389.8,328.1 389.4,328.5 388.9,329.0 388.3,329.5 387.5,330.0 386.6,330.4 385.7,330.9 385.0,331.2 384.5,331.5Z" fill="#14f000"/>
<path d="M97.5,329.5 97.2,329.3 96.7,329.1 96.1,328.9 95.5,328.6 94.9,328.3 94.5,328.0 94.1,327.7 93.8,327.4 93.6,327.2 93.3,326.8 93.1,326.5 93.0,326.0 92.9,325.4 92.8,324.8 92.8,324.1 92.8,323.4 92.9,322.7 93.0,322.0 93.2,321.4 93.5,320.8 93.8,320.2 94.2,319.6 94.6,319.1 95.0,318.5 95.5,317.9 96.0,317.4 96.5,316.8 97.0,316.3 97.6,315.8 98.2,315.3 98.8,314.9 99.4,314.4 100.0,314.1 100.7,313.7 101.3,313.3 102.0,313.0 102.7,312.7 103.4,312.4 104.1,312.1 104.9,311.9 105.7,311.6 106.5,311.4 107.4,311.1 108.2,310.9 109.2,310.7 110.1,310.4 111.0,310.2 112.0,310.0 112.9,309.8 113.8,309.6 114.7,309.5 115.7,309.3 116.8,309.2 118.0,309.1 119.6,309.0 121.4,308.9 123.4,308.9 125.3,308.9 126.9,308.8 128.0,308.8 354.0,308.8 355.1,308.8 356.7,308.9 358.6,308.9 360.6,308.9 362.4,309.0 364.0,309.1 365.2,309.2 366.3,309.3 367.3,309.5 368.2,309.6 369.1,309.8 370.0,310.0 371.0,310.2 371.9,310.4 372.8,310.7 373.8,310.9 374.6,311.1 375.5,311.4 376.3,311.6 377.1,311.9 377.9,312.1 378.6,312.4 379.3,312.7 380.0,313.0 380.7,313.3 381.3,313.7 382.0,314.1 382.6,314.4 383.2,314.9 383.8,315.3 384.4,315.8 385.0,316.3 385.5,316.8 386.0,317.4 386.5,317.9 387.0,318.5 387.4,319.1 387.8,319.6 388.2,320.2 388.5,320.8 388.8,321.4 389.0,322.0 389.1,322.7 389.2,323.4 389.2,324.1 389.2,324.8 389.1,325.4 389.0,326.0 388.9,326.5 388.7,326.8 388.4,327.2 388.2,327.4 387.9,327.7 387.5,328.0 387.1,328.3 386.5,328.6 385.9,328.9 385.3,329.1 384.8,329.3 384.5,329.5Z" fill="#aae61e"/>
<path d="M97.5,328.5 97.3,328.4 96.9,328.2 96.6,328.1 96.2,327.9 95.8,327.7 95.5,327.5 95.3,327.3 95.1,327.2 94.9,327.1 94.8,327.0 94.7,326.7 94.6,326.2 94.5,325.6 94.5,324.8 94.4,323.9 94.4,323.0 94.5,322.1 94.6,321.2 94.8,320.5 95.1,319.9 95.4,319.3 95.8,318.7 96.3,318.1 96.8,317.5 97.3,316.9 97.8,316.4 98.4,315.9 99.1,315.3 99.8,314.9 100.5,314.4 101.2,314.0 102.0,313.6 102.8,313.2 103.7,312.8 104.6,312.5 105.5,312.2 106.5,311.9 107.5,311.7 108.5,311.5 109.6,311.4 110.7,311.2 111.8,311.1 112.7,311.0 113.7,310.9 114.6,310.9 115.6,310.9 116.7,310.8 118.0,310.8 119.6,310.8 121.4,310.7 123.4,310.7 125.3,310.7 126.9,310.7 128.0,310.7 354.0,310.7 355.1,310.7 356.7,310.7 358.6,310.7 360.6,310.7 362.4,310.8 364.0,310.8 365.3,310.8 366.4,310.9 367.4,310.9 368.3,310.9 369.3,311.0 370.2,311.1 371.3,311.2 372.4,311.4 373.5,311.5 374.5,311.7 375.5,311.9 376.5,312.2 377.4,312.5 378.3,312.8 379.2,313.2 380.0,313.6 380.8,314.0 381.5,314.4 382.2,314.9 382.9,315.3 383.6,315.9 384.2,316.4 384.7,316.9 385.2,317.5 385.7,318.1 386.2,318.7 386.6,319.3 386.9,319.9 387.2,320.5 387.4,321.2 387.5,322.1 387.6,323.0 387.6,323.9 387.5,324.8 387.5,325.6 387.4,326.2 387.3,326.7 387.2,327.0 387.1,327.1 386.9,327.2 386.7,327.3 386.5,327.5 386.2,327.7 385.8,327.9 385.4,328.1 385.1,328.2 384.7,328.4 384.5,328.5Z" fill="#f5f028"/>
<path d="M97.5,328.5 97.5,328.1 97.4,327.6 97.4,327.0 97.3,326.3 97.3,325.6 97.4,325.0 97.5,324.4 97.6,323.7 97.8,323.1 98.0,322.5 98.3,321.8 98.6,321.2 99.0,320.7 99.4,320.1 99.9,319.6 100.5,319.1 101.1,318.6 101.8,318.1 102.5,317.7 103.2,317.3 104.1,316.9 104.9,316.5 105.8,316.2 106.8,315.9 107.6,315.6 108.4,315.4 109.2,315.2 110.2,315.0 111.4,314.9 113.0,314.7 115.2,314.5 117.9,314.4 120.9,314.2 123.8,314.1 126.3,314.0 128.0,313.9 354.0,313.9 355.7,314.0 358.2,314.1 361.1,314.2 364.1,314.4 366.8,314.5 369.0,314.7 370.6,314.9 371.8,315.0 372.8,315.2 373.6,315.4 374.4,315.6 375.2,315.9 376.2,316.2 377.1,316.5 377.9,316.9 378.8,317.3 379.5,317.7 380.2,318.1 380.9,318.6 381.5,319.1 382.1,319.6 382.6,320.1 383.0,320.7 383.4,321.2 383.7,321.8 384.0,322.5 384.2,323.1 384.4,323.7 384.5,324.4 384.6,325.0 384.7,325.6 384.7,326.3 384.6,327.0 384.6,327.6 384.5,328.1 384.5,328.5Z" fill="#ffd700"/>
<path d="M98.0,328.5 98.0,328.2 98.0,327.8 98.0,327.3 98.0,326.7 98.1,326.2 98.3,325.6 98.5,325.0 98.8,324.4 99.2,323.7 99.6,323.1 100.0,322.4 100.5,321.9 101.0,321.4 101.5,321.0 102.1,320.7 102.8,320.3 103.5,320.0 104.2,319.7 105.1,319.4 106.0,319.1 107.0,318.8 108.1,318.6 109.2,318.3 110.5,318.1 111.9,317.9 113.5,317.8 115.1,317.6 116.8,317.5 118.5,317.4 120.0,317.3 121.5,317.2 123.1,317.1 124.6,317.1 126.0,317.0 127.1,316.9 128.0,316.9 354.0,316.9 354.9,316.9 356.0,317.0 357.4,317.1 358.9,317.1 360.5,317.2 362.0,317.3 363.5,317.4 365.2,317.5 366.9,317.6 368.5,317.8 370.1,317.9 371.5,318.1 372.8,318.3 373.9,318.6 375.0,318.8 376.0,319.1 376.9,319.4 377.8,319.7 378.5,320.0 379.2,320.3 379.9,320.7 380.5,321.0 381.0,321.4 381.5,321.9 382.0,322.4 382.4,323.1 382.8,323.7 383.2,324.4 383.5,325.0 383.7,325.6 383.9,326.2 384.0,326.7 384.0,327.3 384.0,327.8 384.0,328.2 384.0,328.5Z" fill="#ffa500"/>
<path d="M98.5,328.5 98.5,328.3 98.5,327.9 98.6,327.6 98.6,327.1 98.8,326.7 99.0,326.2 99.3,325.8 99.7,325.2 100.1,324.6 100.6,324.1 101.1,323.6 101.8,323.1 102.4,322.7 103.1,322.4 103.8,322.1 104.7,321.8 105.6,321.5 106.8,321.3 108.0,321.1 109.4,320.9 110.9,320.7 112.6,320.6 114.2,320.4 116.0,320.3 118.0,320.2 120.2,320.1 122.6,320.0 124.8,320.0 126.7,319.9 128.0,319.9 354.0,319.9 355.3,319.9 357.2,320.0 359.4,320.0 361.8,320.1 364.0,320.2 366.0,320.3 367.8,320.4 369.4,320.6 371.1,320.7 372.6,320.9 374.0,321.1 375.2,321.3 376.4,321.5 377.3,321.8 378.2,322.1 378.9,322.4 379.6,322.7 380.2,323.1 380.9,323.6 381.4,324.1 381.9,324.6 382.3,325.2 382.7,325.8 383.0,326.2 383.2,326.7 383.4,327.1 383.4,327.6 383.5,327.9 383.5,328.3 383.5,328.5Z" fill="#ff7d00"/>
<path d="M98.8,328.5 98.8,328.3 98.8,328.0 98.8,327.7 98.8,327.4 99.0,327.0 99.2,326.6 99.5,326.2 100.0,325.7 100.5,325.3 101.1,324.8 101.7,324.4 102.4,324.0 103.1,323.7 103.9,323.4 104.8,323.2 105.7,323.0 106.8,322.8 108.0,322.6 109.4,322.4 111.0,322.3 112.7,322.2 114.5,322.1 116.3,322.1 118.0,322.0 119.8,321.9 121.7,321.9 123.6,321.9 125.4,321.8 126.9,321.8 128.0,321.8 354.0,321.8 355.1,321.8 356.6,321.8 358.4,321.9 360.3,321.9 362.2,321.9 364.0,322.0 365.7,322.1 367.5,322.1 369.3,322.2 371.0,322.3 372.6,322.4 374.0,322.6 375.2,322.8 376.3,323.0 377.2,323.2 378.1,323.4 378.9,323.7 379.6,324.0 380.3,324.4 380.9,324.8 381.5,325.3 382.0,325.7 382.5,326.2 382.8,326.6 383.0,327.0 383.2,327.4 383.2,327.7 383.2,328.0 383.2,328.3 383.2,328.5Z" fill="#ff5a00"/>
<path d="M99.0,328.5 99.0,328.3 99.0,328.1 99.0,327.9 99.1,327.6 99.2,327.3 99.5,327.0 99.9,326.7 100.3,326.3 100.9,325.9 101.5,325.5 102.2,325.2 103.0,324.9 103.9,324.7 104.8,324.5 105.8,324.3 106.9,324.1 108.0,324.0 109.2,323.9 110.5,323.8 111.9,323.7 113.4,323.6 114.9,323.6 116.4,323.5 118.0,323.5 119.7,323.5 121.6,323.4 123.5,323.4 125.4,323.4 126.9,323.4 128.0,323.4 354.0,323.4 355.1,323.4 356.6,323.4 358.5,323.4 360.4,323.4 362.3,323.5 364.0,323.5 365.6,323.5 367.1,323.6 368.6,323.6 370.1,323.7 371.5,323.8 372.8,323.9 374.0,324.0 375.1,324.1 376.2,324.3 377.2,324.5 378.1,324.7 379.0,324.9 379.8,325.2 380.5,325.5 381.1,325.9 381.7,326.3 382.1,326.7 382.5,327.0 382.8,327.3 382.9,327.6 383.0,327.9 383.0,328.1 383.0,328.3 383.0,328.5Z" fill="#ff0000"/>
</g>
<rect x="238" y="297" width="6" height="31" fill="#000004"/>
<g fill="none" stroke="#ececec" stroke-width="1" shape-rendering="crispEdges">
<path d="M54.5,279.5H427.5V296.5H54.5Z M97.5,279.5V296.5 M384.5,279.5V296.5"/>
<path d="M97.5,388.5V328.5H384.5V388.5Z"/>
</g>
<g fill="none" stroke="#a4a4a4" stroke-width="1" shape-rendering="crispEdges">
<path d="M6.5,279V389 M474.5,279V389"/>
</g>
<g fill="none" stroke="#00e400" stroke-width="1" shape-rendering="crispEdges">
<path d="M6,279.5H54 M428,279.5H475 M6,388.5H97 M385,388.5H475"/>
</g>
<g style="will-change:transform">
<rect x="484" y="126.00" width="9" height="17.33" fill="#0000ff"/>
<rect x="484" y="143.03" width="9" height="17.33" fill="#0074fc"/>
<rect x="484" y="160.06" width="9" height="17.33" fill="#069ce6"/>
<rect x="484" y="177.09" width="9" height="17.33" fill="#00c6d8"/>
<rect x="484" y="194.12" width="9" height="17.33" fill="#00d796"/>
<rect x="484" y="211.15" width="9" height="17.33" fill="#00e13c"/>
<rect x="484" y="228.18" width="9" height="17.33" fill="#14f000"/>
<rect x="484" y="245.21" width="9" height="17.33" fill="#aae61e"/>
<rect x="484" y="262.24" width="9" height="17.33" fill="#f5f028"/>
<rect x="484" y="279.27" width="9" height="17.33" fill="#ffd700"/>
<rect x="484" y="296.30" width="9" height="17.33" fill="#ffa500"/>
<rect x="484" y="313.33" width="9" height="17.33" fill="#ff7d00"/>
<rect x="484" y="330.36" width="9" height="17.33" fill="#ff5a00"/>
<rect x="484" y="347.39" width="9" height="17.33" fill="#ff0000"/>
<text x="504.60" y="129.50" fill="#ececec" stroke="#ececec" textLength="27.72" lengthAdjust="spacingAndGlyphs" xml:space="preserve">0.00</text>
<text x="504.60" y="146.60" fill="#ececec" stroke="#ececec" textLength="27.72" lengthAdjust="spacingAndGlyphs" xml:space="preserve">0.02</text>
<text x="504.60" y="163.70" fill="#ececec" stroke="#ececec" textLength="27.72" lengthAdjust="spacingAndGlyphs" xml:space="preserve">0.04</text>
<text x="504.60" y="180.80" fill="#ececec" stroke="#ececec" textLength="27.72" lengthAdjust="spacingAndGlyphs" xml:space="preserve">0.07</text>
<text x="504.60" y="197.90" fill="#ececec" stroke="#ececec" textLength="27.72" lengthAdjust="spacingAndGlyphs" xml:space="preserve">0.09</text>
<text x="504.60" y="215.00" fill="#ececec" stroke="#ececec" textLength="27.72" lengthAdjust="spacingAndGlyphs" xml:space="preserve">0.11</text>
<text x="504.60" y="232.10" fill="#ececec" stroke="#ececec" textLength="27.72" lengthAdjust="spacingAndGlyphs" xml:space="preserve">0.13</text>
<text x="504.60" y="249.20" fill="#ececec" stroke="#ececec" textLength="27.72" lengthAdjust="spacingAndGlyphs" xml:space="preserve">0.15</text>
<text x="504.60" y="266.30" fill="#ececec" stroke="#ececec" textLength="27.72" lengthAdjust="spacingAndGlyphs" xml:space="preserve">0.17</text>
<text x="504.60" y="283.40" fill="#ececec" stroke="#ececec" textLength="27.72" lengthAdjust="spacingAndGlyphs" xml:space="preserve">0.19</text>
<text x="504.60" y="300.50" fill="#ececec" stroke="#ececec" textLength="27.72" lengthAdjust="spacingAndGlyphs" xml:space="preserve">0.21</text>
<text x="504.60" y="317.60" fill="#ececec" stroke="#ececec" textLength="27.72" lengthAdjust="spacingAndGlyphs" xml:space="preserve">0.24</text>
<text x="504.60" y="334.70" fill="#ececec" stroke="#ececec" textLength="27.72" lengthAdjust="spacingAndGlyphs" xml:space="preserve">0.26</text>
<text x="504.60" y="351.80" fill="#ececec" stroke="#ececec" textLength="27.72" lengthAdjust="spacingAndGlyphs" xml:space="preserve">0.28</text>
<text x="504.60" y="368.90" fill="#ececec" stroke="#ececec" textLength="27.72" lengthAdjust="spacingAndGlyphs" xml:space="preserve">0.30</text>
<rect x="570" y="128.00" width="9" height="17.37" fill="#0000ff"/>
<rect x="570" y="145.07" width="9" height="17.37" fill="#0074fc"/>
<rect x="570" y="162.14" width="9" height="17.37" fill="#069ce6"/>
<rect x="570" y="179.21" width="9" height="17.37" fill="#00c6d8"/>
<rect x="570" y="196.28" width="9" height="17.37" fill="#00d796"/>
<rect x="570" y="213.35" width="9" height="17.37" fill="#00e13c"/>
<rect x="570" y="230.42" width="9" height="17.37" fill="#14f000"/>
<rect x="570" y="247.49" width="9" height="17.37" fill="#aae61e"/>
<rect x="570" y="264.56" width="9" height="17.37" fill="#f5f028"/>
<rect x="570" y="281.63" width="9" height="17.37" fill="#ffd700"/>
<rect x="570" y="298.70" width="9" height="17.37" fill="#ffa500"/>
<rect x="570" y="315.77" width="9" height="17.37" fill="#ff7d00"/>
<rect x="570" y="332.84" width="9" height="17.37" fill="#ff5a00"/>
<rect x="570" y="349.91" width="9" height="17.37" fill="#ff0000"/>
<text x="590.60" y="131.10" fill="#ececec" stroke="#ececec" textLength="20.79" lengthAdjust="spacingAndGlyphs" xml:space="preserve">300</text>
<text x="590.60" y="148.23" fill="#ececec" stroke="#ececec" textLength="20.79" lengthAdjust="spacingAndGlyphs" xml:space="preserve">317</text>
<text x="590.60" y="165.36" fill="#ececec" stroke="#ececec" textLength="20.79" lengthAdjust="spacingAndGlyphs" xml:space="preserve">334</text>
<text x="590.60" y="182.49" fill="#ececec" stroke="#ececec" textLength="20.79" lengthAdjust="spacingAndGlyphs" xml:space="preserve">350</text>
<text x="590.60" y="199.62" fill="#ececec" stroke="#ececec" textLength="20.79" lengthAdjust="spacingAndGlyphs" xml:space="preserve">367</text>
<text x="590.60" y="216.75" fill="#ececec" stroke="#ececec" textLength="20.79" lengthAdjust="spacingAndGlyphs" xml:space="preserve">384</text>
<text x="590.60" y="233.88" fill="#ececec" stroke="#ececec" textLength="20.79" lengthAdjust="spacingAndGlyphs" xml:space="preserve">400</text>
<text x="590.60" y="251.01" fill="#ececec" stroke="#ececec" textLength="20.79" lengthAdjust="spacingAndGlyphs" xml:space="preserve">417</text>
<text x="590.60" y="268.14" fill="#ececec" stroke="#ececec" textLength="20.79" lengthAdjust="spacingAndGlyphs" xml:space="preserve">433</text>
<text x="590.60" y="285.27" fill="#ececec" stroke="#ececec" textLength="20.79" lengthAdjust="spacingAndGlyphs" xml:space="preserve">450</text>
<text x="590.60" y="302.40" fill="#ececec" stroke="#ececec" textLength="20.79" lengthAdjust="spacingAndGlyphs" xml:space="preserve">467</text>
<text x="590.60" y="319.53" fill="#ececec" stroke="#ececec" textLength="20.79" lengthAdjust="spacingAndGlyphs" xml:space="preserve">483</text>
<text x="590.60" y="336.66" fill="#ececec" stroke="#ececec" textLength="20.79" lengthAdjust="spacingAndGlyphs" xml:space="preserve">500</text>
<text x="590.60" y="353.79" fill="#ececec" stroke="#ececec" textLength="20.79" lengthAdjust="spacingAndGlyphs" xml:space="preserve">516</text>
<text x="590.60" y="370.92" fill="#ececec" stroke="#ececec" textLength="20.79" lengthAdjust="spacingAndGlyphs" xml:space="preserve">533</text>
<text x="497.60" y="112.30" fill="#ececec" stroke="#ececec" textLength="41.58" lengthAdjust="spacingAndGlyphs" xml:space="preserve">Vector</text>
<text x="585.20" y="114.80" fill="#ececec" stroke="#ececec" textLength="27.72" lengthAdjust="spacingAndGlyphs" xml:space="preserve">TEM1</text>
<text x="497.60" y="386.40" fill="#ececec" stroke="#ececec" textLength="20.79" lengthAdjust="spacingAndGlyphs" xml:space="preserve">m/s</text>
<ellipse cx="558" cy="37.3" rx="12" ry="14.3" fill="#14ee14"/>
<path d="M561,23.45 A12,14.3 0 1 0 561,51.15 L560.2,49.6 A9.5,10.55 0 0 1 560.6,28.5 Z" fill="#1818f4"/>
<path d="M560.8,28.6 A9.5,10.55 0 0 0 560.2,49.5" fill="none" stroke="#e6e6e6" stroke-width="1.1"/>
<path d="M558.6,23.6 L563,25.4 L561,29 M562.4,46.4 L562.6,50.2 L557,51.2" fill="none" stroke="#ececec" stroke-width="1.3"/>
<path d="M563.5,24.8 A12,14.3 0 0 1 568,30" fill="none" stroke="#c8c8c8" stroke-width="0.9"/>
<text x="531.60" y="68.60" fill="#ececec" stroke="#ececec" textLength="41.58" lengthAdjust="spacingAndGlyphs" xml:space="preserve">PHOTON</text>
<g fill="none" stroke="#ececec" stroke-width="1">
<path d="M507,432.5H512.5V447 M510.7,443.5L512.5,447.5L514.3,443.5 M503,432.8H498.5 M500.8,431L498.5,432.8L500.8,434.6"/>
</g>
<text x="490.00" y="437.00" fill="#ececec" stroke="#ececec" textLength="5.80" lengthAdjust="spacingAndGlyphs" xml:space="preserve">Y</text>
<text x="502.00" y="437.00" fill="#ececec" stroke="#ececec" textLength="5.80" lengthAdjust="spacingAndGlyphs" xml:space="preserve">X</text>
<text x="510.00" y="460.00" fill="#ececec" stroke="#ececec" textLength="5.80" lengthAdjust="spacingAndGlyphs" xml:space="preserve">Z</text>
<text x="147.60" y="36.30" fill="#ececec" stroke="#ececec" textLength="187.11" lengthAdjust="spacingAndGlyphs" xml:space="preserve">The electrode ring is at 0V</text>
<text x="16.80" y="61.00" fill="#00e400" stroke="#00e400" textLength="34.65" lengthAdjust="spacingAndGlyphs" xml:space="preserve">Inlet</text>
<text x="432.80" y="61.40" fill="#00e400" stroke="#00e400" textLength="34.65" lengthAdjust="spacingAndGlyphs" xml:space="preserve">Inlet</text>
<text x="61.60" y="80.30" fill="#ececec" stroke="#ececec" textLength="27.72" lengthAdjust="spacingAndGlyphs" xml:space="preserve">Ring</text>
<text x="392.60" y="80.30" fill="#ececec" stroke="#ececec" textLength="27.72" lengthAdjust="spacingAndGlyphs" xml:space="preserve">Ring</text>
<text x="162.50" y="80.30" fill="#ececec" stroke="#ececec" textLength="152.46" lengthAdjust="spacingAndGlyphs" xml:space="preserve">Upper electrode (200V)</text>
<text x="165.50" y="133.20" fill="#ff1010" stroke="#ff1010" textLength="145.53" lengthAdjust="spacingAndGlyphs" xml:space="preserve">Heated susceptor (0V)</text>
<text x="23.60" y="192.60" fill="#00e400" stroke="#00e400" textLength="41.58" lengthAdjust="spacingAndGlyphs" xml:space="preserve">Outlet</text>
<text x="420.20" y="192.00" fill="#00e400" stroke="#00e400" textLength="41.58" lengthAdjust="spacingAndGlyphs" xml:space="preserve">Outlet</text>
<text x="124.00" y="200.50" fill="#ececec" stroke="#ececec" textLength="55.44" lengthAdjust="spacingAndGlyphs" xml:space="preserve">0.85 m/s</text>
<text x="210.30" y="200.50" fill="#ececec" stroke="#ececec" textLength="27.72" lengthAdjust="spacingAndGlyphs" xml:space="preserve">Min:</text>
<text x="243.60" y="200.50" fill="#1414e0" stroke="#1414e0" textLength="55.44" lengthAdjust="spacingAndGlyphs" xml:space="preserve">1.25E-03</text>
<text x="308.80" y="200.50" fill="#ececec" stroke="#ececec" textLength="27.72" lengthAdjust="spacingAndGlyphs" xml:space="preserve">Max:</text>
<text x="340.60" y="200.50" fill="#ff1010" stroke="#ff1010" textLength="55.44" lengthAdjust="spacingAndGlyphs" xml:space="preserve">2.99E-01</text>
<text x="195.00" y="416.40" fill="#ececec" stroke="#ececec" textLength="101.70" lengthAdjust="spacingAndGlyphs" xml:space="preserve">Temperature (K)</text>
<text x="68.00" y="459.60" fill="#ececec" stroke="#ececec" textLength="213.28" lengthAdjust="spacingAndGlyphs" xml:space="preserve">Silane 2-D REAKTOR 10 Pa,Chemie</text>
</g>
</svg></body></html>
